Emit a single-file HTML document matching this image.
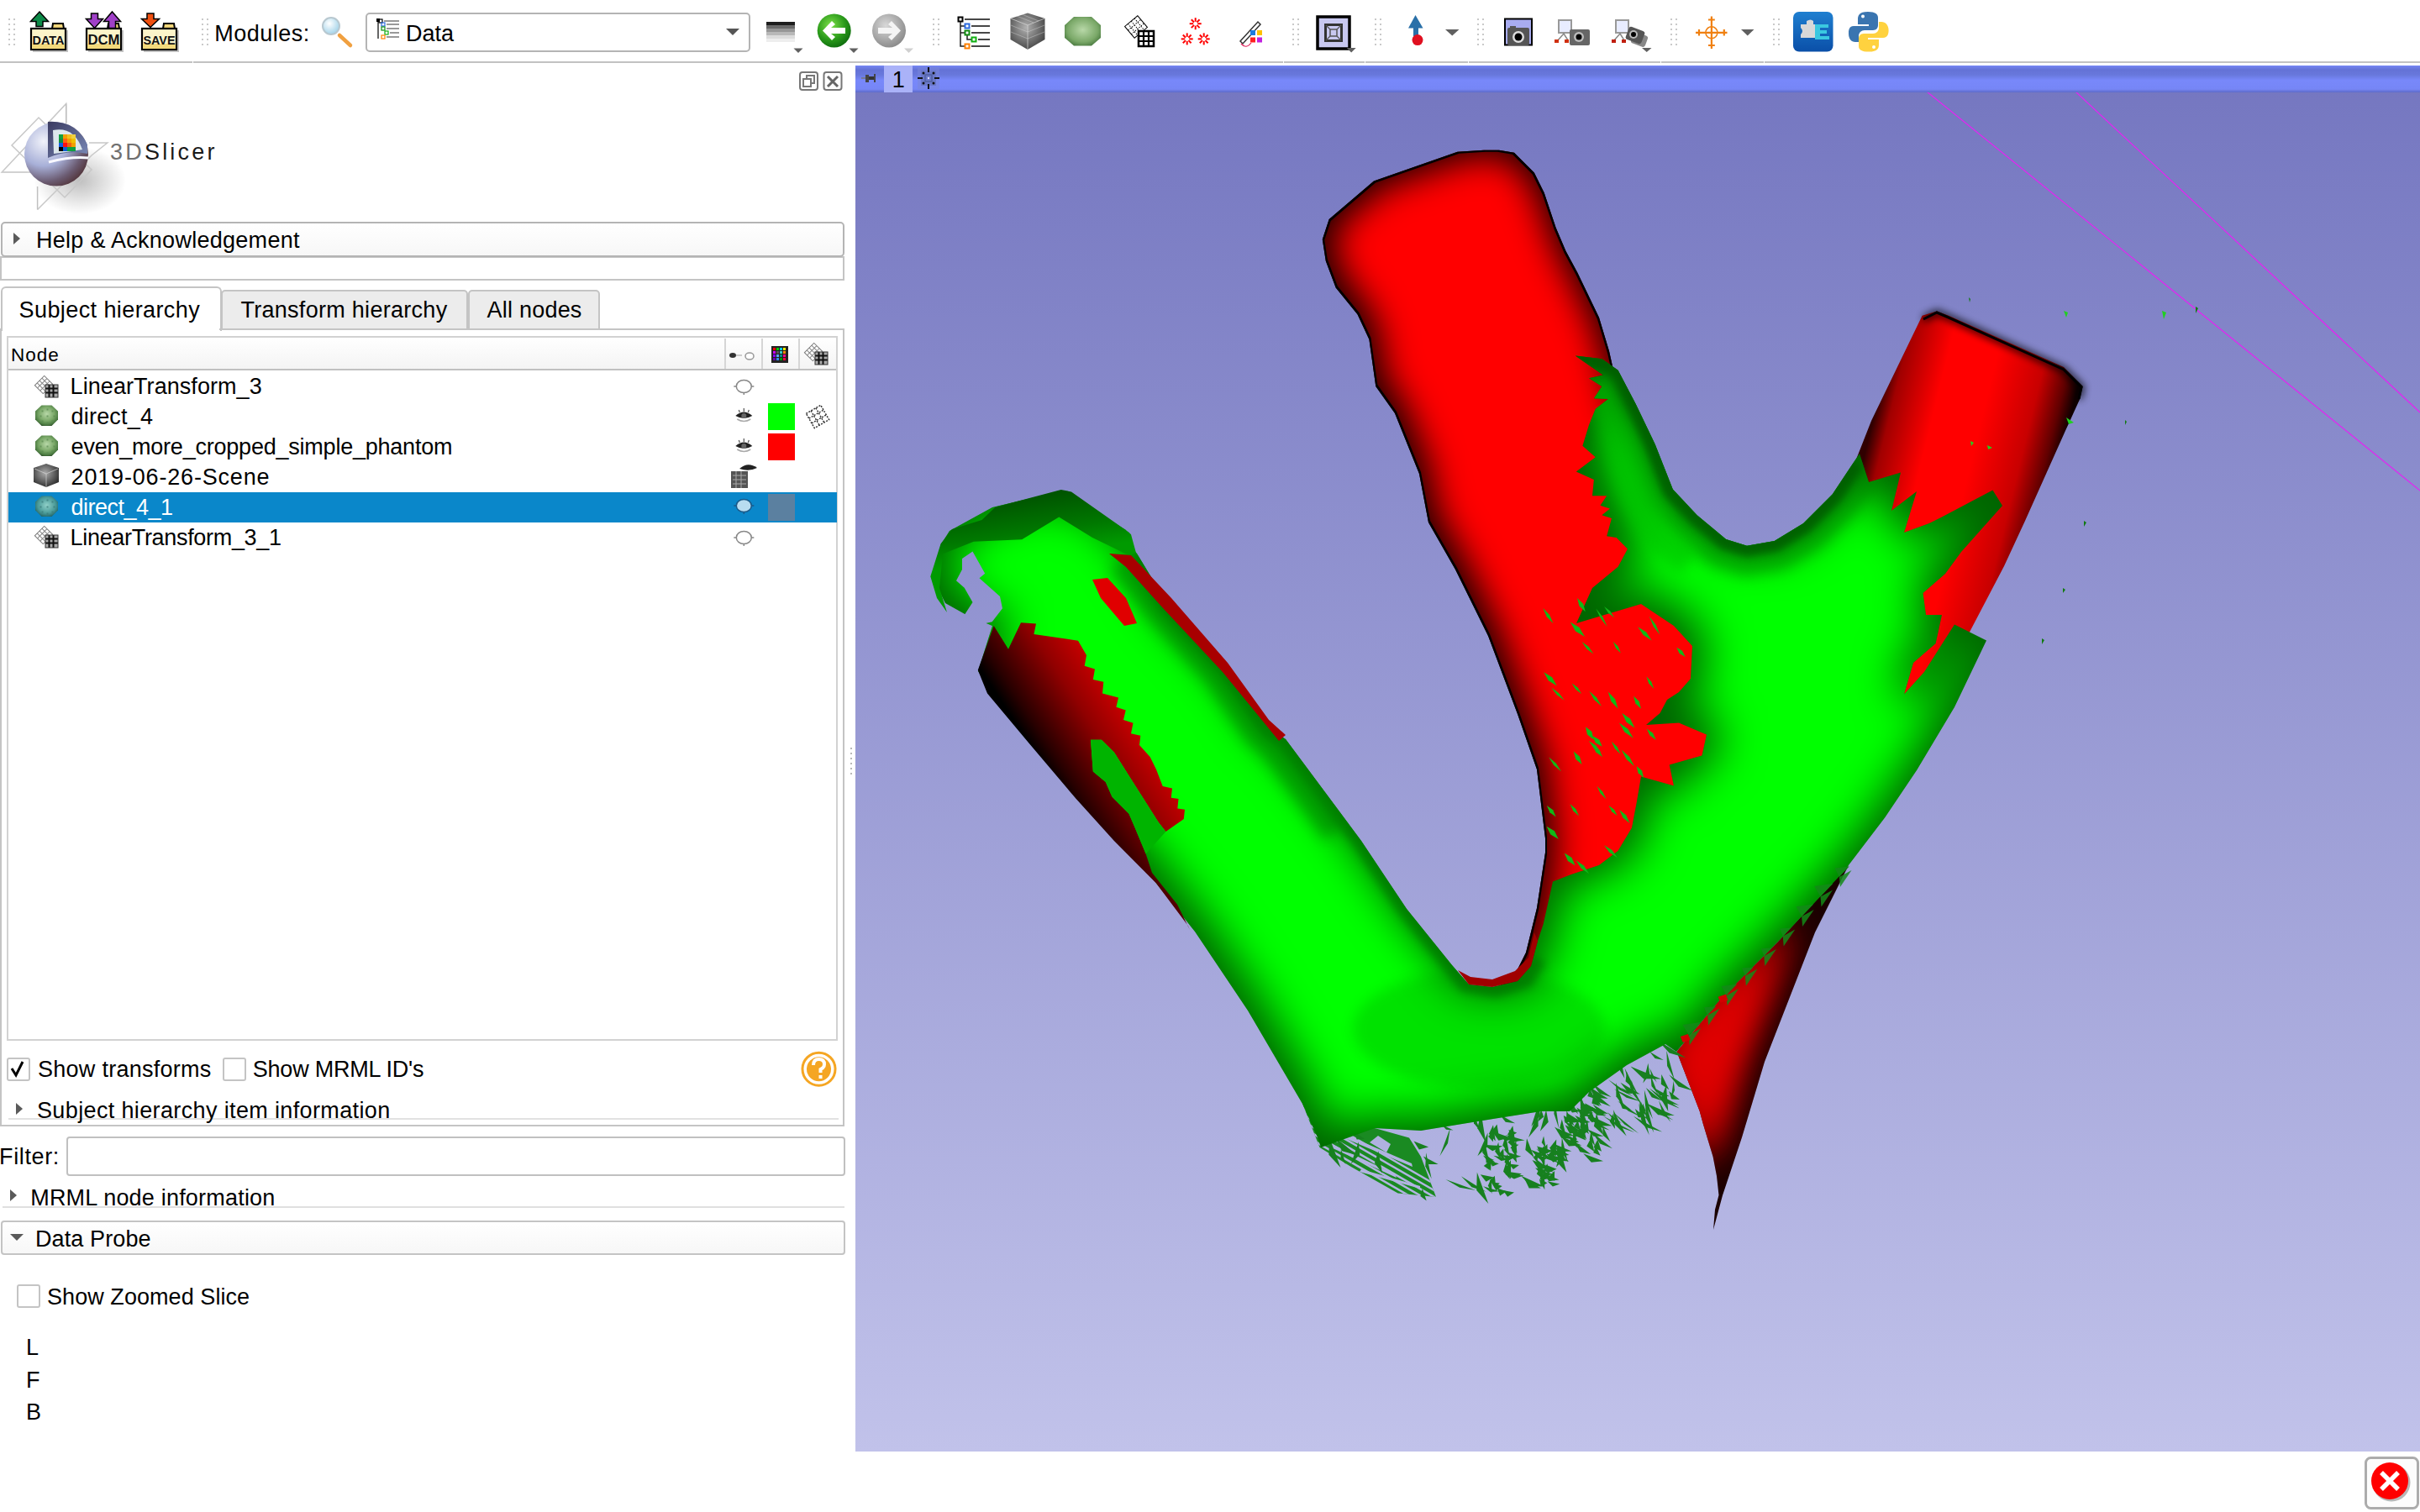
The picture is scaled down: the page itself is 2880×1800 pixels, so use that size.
<!DOCTYPE html>
<html><head><meta charset="utf-8">
<style>
*{margin:0;padding:0;box-sizing:border-box}
html,body{width:2880px;height:1800px;overflow:hidden;background:#fff;font-family:"Liberation Sans",sans-serif;color:#000}
.a{position:absolute}
.t{position:absolute;white-space:nowrap;line-height:1}
.grip{position:absolute;width:8px;border-left:2px dotted #c8c8c8;border-right:2px dotted #c8c8c8}
.tbline{position:absolute;top:73px;height:2px;background:#c2c2c2}
.arrowR{position:absolute;width:0;height:0;border-top:7px solid transparent;border-bottom:7px solid transparent;border-left:8px solid #5a5a5a}
.arrowD{position:absolute;width:0;height:0;border-left:8px solid transparent;border-right:8px solid transparent;border-top:8px solid #5a5a5a}
.ddarrow{position:absolute;width:0;height:0;border-left:8px solid transparent;border-right:8px solid transparent;border-top:8px solid #555}
.cb{position:absolute;width:28px;height:28px;border:2px solid #c4c4c4;border-radius:3px;background:#fff}
</style></head>
<body>
<!-- ============ TOOLBAR ============ -->
<div id="toolbar">
  <div class="tbline" style="left:0px;width:229px"></div>
  <div class="tbline" style="left:230px;width:1297px"></div>
  <div class="tbline" style="left:1528px;width:96px"></div>
  <div class="tbline" style="left:1625px;width:122px"></div>
  <div class="tbline" style="left:1748px;width:228px"></div>
  <div class="tbline" style="left:1977px;width:122px"></div>
  <div class="tbline" style="left:2100px;width:780px"></div>
  <div class="a" style="left:435px;top:15px;width:458px;height:47px;border:2px solid #b4b4b4;border-radius:5px;background:#fff"></div>
  <div class="ddarrow" style="left:864px;top:34px"></div>
<svg class="a" style="left:0;top:0" width="2300" height="76" viewBox="0 0 2300 76"><defs><radialGradient id="gGreenBtn" cx="0.4" cy="0.35" r="0.7"><stop offset="0" stop-color="#7ee04a"/><stop offset="0.6" stop-color="#2a9a1a"/><stop offset="1" stop-color="#0d6a0d"/></radialGradient><radialGradient id="gGrayBtn" cx="0.4" cy="0.35" r="0.7"><stop offset="0" stop-color="#d8d8d8"/><stop offset="0.6" stop-color="#a8a8a8"/><stop offset="1" stop-color="#888"/></radialGradient><linearGradient id="gExt" x1="0" y1="0" x2="0" y2="1"><stop offset="0" stop-color="#1f7fd0"/><stop offset="1" stop-color="#0a4fa8"/></linearGradient><radialGradient id="gCube" cx="0.45" cy="0.4" r="0.6"><stop offset="0" stop-color="#b0b0b0"/><stop offset="1" stop-color="#4a4a4a"/></radialGradient><radialGradient id="gModel" cx="0.5" cy="0.45" r="0.6"><stop offset="0" stop-color="#b8d8a8"/><stop offset="0.7" stop-color="#7aa868"/><stop offset="1" stop-color="#4a7a40"/></radialGradient><radialGradient id="gMag" cx="0.4" cy="0.35" r="0.7"><stop offset="0" stop-color="#ffffff"/><stop offset="1" stop-color="#9cd0e8"/></radialGradient></defs><rect x="10" y="22" width="2" height="2" fill="#c9c9c9"/><rect x="16" y="22" width="2" height="2" fill="#c9c9c9"/><rect x="10" y="28" width="2" height="2" fill="#c9c9c9"/><rect x="16" y="28" width="2" height="2" fill="#c9c9c9"/><rect x="10" y="34" width="2" height="2" fill="#c9c9c9"/><rect x="16" y="34" width="2" height="2" fill="#c9c9c9"/><rect x="10" y="40" width="2" height="2" fill="#c9c9c9"/><rect x="16" y="40" width="2" height="2" fill="#c9c9c9"/><rect x="10" y="46" width="2" height="2" fill="#c9c9c9"/><rect x="16" y="46" width="2" height="2" fill="#c9c9c9"/><rect x="10" y="52" width="2" height="2" fill="#c9c9c9"/><rect x="16" y="52" width="2" height="2" fill="#c9c9c9"/><rect x="240" y="22" width="2" height="2" fill="#c9c9c9"/><rect x="246" y="22" width="2" height="2" fill="#c9c9c9"/><rect x="240" y="28" width="2" height="2" fill="#c9c9c9"/><rect x="246" y="28" width="2" height="2" fill="#c9c9c9"/><rect x="240" y="34" width="2" height="2" fill="#c9c9c9"/><rect x="246" y="34" width="2" height="2" fill="#c9c9c9"/><rect x="240" y="40" width="2" height="2" fill="#c9c9c9"/><rect x="246" y="40" width="2" height="2" fill="#c9c9c9"/><rect x="240" y="46" width="2" height="2" fill="#c9c9c9"/><rect x="246" y="46" width="2" height="2" fill="#c9c9c9"/><rect x="240" y="52" width="2" height="2" fill="#c9c9c9"/><rect x="246" y="52" width="2" height="2" fill="#c9c9c9"/><rect x="1110" y="22" width="2" height="2" fill="#c9c9c9"/><rect x="1116" y="22" width="2" height="2" fill="#c9c9c9"/><rect x="1110" y="28" width="2" height="2" fill="#c9c9c9"/><rect x="1116" y="28" width="2" height="2" fill="#c9c9c9"/><rect x="1110" y="34" width="2" height="2" fill="#c9c9c9"/><rect x="1116" y="34" width="2" height="2" fill="#c9c9c9"/><rect x="1110" y="40" width="2" height="2" fill="#c9c9c9"/><rect x="1116" y="40" width="2" height="2" fill="#c9c9c9"/><rect x="1110" y="46" width="2" height="2" fill="#c9c9c9"/><rect x="1116" y="46" width="2" height="2" fill="#c9c9c9"/><rect x="1110" y="52" width="2" height="2" fill="#c9c9c9"/><rect x="1116" y="52" width="2" height="2" fill="#c9c9c9"/><rect x="1538" y="22" width="2" height="2" fill="#c9c9c9"/><rect x="1544" y="22" width="2" height="2" fill="#c9c9c9"/><rect x="1538" y="28" width="2" height="2" fill="#c9c9c9"/><rect x="1544" y="28" width="2" height="2" fill="#c9c9c9"/><rect x="1538" y="34" width="2" height="2" fill="#c9c9c9"/><rect x="1544" y="34" width="2" height="2" fill="#c9c9c9"/><rect x="1538" y="40" width="2" height="2" fill="#c9c9c9"/><rect x="1544" y="40" width="2" height="2" fill="#c9c9c9"/><rect x="1538" y="46" width="2" height="2" fill="#c9c9c9"/><rect x="1544" y="46" width="2" height="2" fill="#c9c9c9"/><rect x="1538" y="52" width="2" height="2" fill="#c9c9c9"/><rect x="1544" y="52" width="2" height="2" fill="#c9c9c9"/><rect x="1636" y="22" width="2" height="2" fill="#c9c9c9"/><rect x="1642" y="22" width="2" height="2" fill="#c9c9c9"/><rect x="1636" y="28" width="2" height="2" fill="#c9c9c9"/><rect x="1642" y="28" width="2" height="2" fill="#c9c9c9"/><rect x="1636" y="34" width="2" height="2" fill="#c9c9c9"/><rect x="1642" y="34" width="2" height="2" fill="#c9c9c9"/><rect x="1636" y="40" width="2" height="2" fill="#c9c9c9"/><rect x="1642" y="40" width="2" height="2" fill="#c9c9c9"/><rect x="1636" y="46" width="2" height="2" fill="#c9c9c9"/><rect x="1642" y="46" width="2" height="2" fill="#c9c9c9"/><rect x="1636" y="52" width="2" height="2" fill="#c9c9c9"/><rect x="1642" y="52" width="2" height="2" fill="#c9c9c9"/><rect x="1758" y="22" width="2" height="2" fill="#c9c9c9"/><rect x="1764" y="22" width="2" height="2" fill="#c9c9c9"/><rect x="1758" y="28" width="2" height="2" fill="#c9c9c9"/><rect x="1764" y="28" width="2" height="2" fill="#c9c9c9"/><rect x="1758" y="34" width="2" height="2" fill="#c9c9c9"/><rect x="1764" y="34" width="2" height="2" fill="#c9c9c9"/><rect x="1758" y="40" width="2" height="2" fill="#c9c9c9"/><rect x="1764" y="40" width="2" height="2" fill="#c9c9c9"/><rect x="1758" y="46" width="2" height="2" fill="#c9c9c9"/><rect x="1764" y="46" width="2" height="2" fill="#c9c9c9"/><rect x="1758" y="52" width="2" height="2" fill="#c9c9c9"/><rect x="1764" y="52" width="2" height="2" fill="#c9c9c9"/><rect x="1988" y="22" width="2" height="2" fill="#c9c9c9"/><rect x="1994" y="22" width="2" height="2" fill="#c9c9c9"/><rect x="1988" y="28" width="2" height="2" fill="#c9c9c9"/><rect x="1994" y="28" width="2" height="2" fill="#c9c9c9"/><rect x="1988" y="34" width="2" height="2" fill="#c9c9c9"/><rect x="1994" y="34" width="2" height="2" fill="#c9c9c9"/><rect x="1988" y="40" width="2" height="2" fill="#c9c9c9"/><rect x="1994" y="40" width="2" height="2" fill="#c9c9c9"/><rect x="1988" y="46" width="2" height="2" fill="#c9c9c9"/><rect x="1994" y="46" width="2" height="2" fill="#c9c9c9"/><rect x="1988" y="52" width="2" height="2" fill="#c9c9c9"/><rect x="1994" y="52" width="2" height="2" fill="#c9c9c9"/><rect x="2110" y="22" width="2" height="2" fill="#c9c9c9"/><rect x="2116" y="22" width="2" height="2" fill="#c9c9c9"/><rect x="2110" y="28" width="2" height="2" fill="#c9c9c9"/><rect x="2116" y="28" width="2" height="2" fill="#c9c9c9"/><rect x="2110" y="34" width="2" height="2" fill="#c9c9c9"/><rect x="2116" y="34" width="2" height="2" fill="#c9c9c9"/><rect x="2110" y="40" width="2" height="2" fill="#c9c9c9"/><rect x="2116" y="40" width="2" height="2" fill="#c9c9c9"/><rect x="2110" y="46" width="2" height="2" fill="#c9c9c9"/><rect x="2116" y="46" width="2" height="2" fill="#c9c9c9"/><rect x="2110" y="52" width="2" height="2" fill="#c9c9c9"/><rect x="2116" y="52" width="2" height="2" fill="#c9c9c9"/><g transform="translate(36,0)">
  <rect x="3" y="36" width="42" height="26" fill="#555" opacity="0.35"/>
  <path d="M26,34 L27,28 L39,28 L40,34 Z" fill="#f3d77a" stroke="#000" stroke-width="2"/>
  <rect x="1" y="34" width="41" height="25" fill="#fbf4c9" stroke="#000" stroke-width="2.2"/>
  <rect x="2" y="52" width="39" height="6" fill="#f2d97c"/>
  <text x="21.5" y="53" font-family="Liberation Sans" font-size="15" font-weight="bold" text-anchor="middle" fill="#111" textLength="38" lengthAdjust="spacingAndGlyphs">DATA</text>
</g><path d="M47,14 L57.5,25.5 L51.0,25.5 L51.0,31.5 L43.0,31.5 L43.0,25.5 L36.5,25.5 Z" fill="#0d8a48" stroke="#000" stroke-width="1.5"/><g transform="translate(102,0)">
  <rect x="3" y="36" width="42" height="26" fill="#555" opacity="0.35"/>
  <path d="M26,34 L27,28 L39,28 L40,34 Z" fill="#f3d77a" stroke="#000" stroke-width="2"/>
  <rect x="1" y="34" width="41" height="25" fill="#fbf4c9" stroke="#000" stroke-width="2.2"/>
  <rect x="2" y="52" width="39" height="6" fill="#f2d97c"/>
  <text x="21.5" y="53" font-family="Liberation Sans" font-size="16" font-weight="bold" text-anchor="middle" fill="#111" textLength="38" lengthAdjust="spacingAndGlyphs">DCM</text>
</g><path d="M112.5,33.5 L122.5,22.5 L116.5,22.5 L116.5,16.0 L108.5,16.0 L108.5,22.5 L102.5,22.5 Z" fill="#a040c8" stroke="#000" stroke-width="1.5"/><path d="M133.5,14 L143.5,25.5 L137.5,25.5 L137.5,33.5 L129.5,33.5 L129.5,25.5 L123.5,25.5 Z" fill="#a040c8" stroke="#000" stroke-width="1.5"/><g transform="translate(168,0)">
  <rect x="3" y="36" width="42" height="26" fill="#555" opacity="0.35"/>
  <path d="M26,34 L27,28 L39,28 L40,34 Z" fill="#f3d77a" stroke="#000" stroke-width="2"/>
  <rect x="1" y="34" width="41" height="25" fill="#fbf4c9" stroke="#000" stroke-width="2.2"/>
  <rect x="2" y="52" width="39" height="6" fill="#f2d97c"/>
  <text x="21.5" y="53" font-family="Liberation Sans" font-size="15" font-weight="bold" text-anchor="middle" fill="#111" textLength="38" lengthAdjust="spacingAndGlyphs">SAVE</text>
</g><path d="M179,32.5 L189.5,22.5 L183.0,22.5 L183.0,16.0 L175.0,16.0 L175.0,22.5 L168.5,22.5 Z" fill="#f05010" stroke="#000" stroke-width="1.5"/><line x1="404" y1="42" x2="417" y2="54" stroke="#f0a040" stroke-width="4.5" stroke-linecap="round"/><circle cx="394" cy="31" r="10" fill="url(#gMag)" stroke="#b8c8d0" stroke-width="2"/><rect x="448" y="22" width="4" height="4" fill="#000"/><line x1="450" y1="26" x2="450" y2="46" stroke="#333" stroke-width="1.5"/><rect x="451" y="23" width="4" height="4" fill="none" stroke="#000" stroke-width="1.2"/><line x1="457" y1="25" x2="475" y2="25" stroke="#555" stroke-width="1.2"/><rect x="454" y="27" width="4" height="4" fill="none" stroke="#2a6adf" stroke-width="1.2"/><line x1="460" y1="29" x2="475" y2="29" stroke="#555" stroke-width="1.2"/><rect x="454" y="32" width="4" height="4" fill="none" stroke="#109010" stroke-width="1.2"/><line x1="460" y1="34" x2="475" y2="34" stroke="#555" stroke-width="1.2"/><rect x="458" y="37" width="4" height="4" fill="none" stroke="#10b010" stroke-width="1.2"/><line x1="464" y1="39" x2="475" y2="39" stroke="#555" stroke-width="1.2"/><rect x="454" y="42" width="4" height="4" fill="none" stroke="#ff8000" stroke-width="1.2"/><line x1="460" y1="44" x2="475" y2="44" stroke="#555" stroke-width="1.2"/><rect x="912" y="26" width="34" height="4" fill="#1e1e1e"/><rect x="912" y="30" width="34" height="4" fill="#6a6a6a"/><rect x="912" y="34" width="34" height="4" fill="#969696"/><rect x="912" y="38" width="34" height="4" fill="#b8b8b8"/><rect x="912" y="42" width="34" height="4" fill="#dcdcdc"/><rect x="912" y="46" width="34" height="4" fill="#eeeeee"/><path d="M944.5,57.5 L955.5,57.5 L950.0,63.0 Z" fill="#606060"/><path d="M1010.5,57.5 L1021.5,57.5 L1016.0,63.0 Z" fill="#606060"/><path d="M1076,57.5 L1087,57.5 L1081.5,63.0 Z" fill="#d0d0d0"/><circle cx="992.7" cy="36.4" r="20" fill="url(#gGreenBtn)"/><path d="M979,36.4 L990,25 L994,29 L989,33 L1006,33 L1006,40 L989,40 L994,44 L990,48 Z" fill="#fff"/><circle cx="1058" cy="36.4" r="20" fill="url(#gGrayBtn)"/><path d="M1072,36.4 L1061,25 L1057,29 L1062,33 L1045,33 L1045,40 L1062,40 L1057,44 L1061,48 Z" fill="#f4f4f4"/><rect x="1140.5" y="20.5" width="5" height="5" fill="none" stroke="#000" stroke-width="2"/><path d="M1143,26 L1143,55 L1148,55 M1143,31 L1148,31 M1143,39 L1148,39 M1151,42 L1151,47 L1156,47" fill="none" stroke="#222" stroke-width="1.5"/><rect x="1148.5" y="28.5" width="5" height="5" fill="none" stroke="#2a6adf" stroke-width="2"/><rect x="1148.5" y="36.5" width="5" height="5" fill="none" stroke="#108a10" stroke-width="2"/><rect x="1156.5" y="44.5" width="5" height="5" fill="none" stroke="#10b010" stroke-width="2"/><rect x="1148.5" y="52.5" width="5" height="5" fill="none" stroke="#ff8000" stroke-width="2"/><line x1="1148" y1="23" x2="1178" y2="23" stroke="#333" stroke-width="1.8"/><line x1="1156" y1="31" x2="1178" y2="31" stroke="#333" stroke-width="1.8"/><line x1="1156" y1="39" x2="1178" y2="39" stroke="#333" stroke-width="1.8"/><line x1="1164" y1="47" x2="1178" y2="47" stroke="#333" stroke-width="1.8"/><line x1="1156" y1="55" x2="1178" y2="55" stroke="#333" stroke-width="1.8"/><path d="M1223,15.5 L1243.5,22 L1243.5,47 L1223,59 L1202.5,47 L1202.5,22 Z" fill="url(#gCube)"/><path d="M1203,22 L1223,30 L1243,22 M1223,30 L1223,59" stroke="#d8d8d8" stroke-width="1" fill="none" opacity="0.7"/><path d="M1210,19 L1230,27 M1216,17 L1236,25 M1203,30 L1223,38 M1203,38 L1223,46 M1243,30 L1223,38 M1243,38 L1223,46" stroke="#ddd" stroke-width="0.8" opacity="0.5"/><path d="M1278,20 L1299,20 L1310,30 L1310,45 L1299,54.5 L1278,54.5 L1267,45 L1267,30 Z" fill="url(#gModel)"/><g transform="rotate(-40 1352 32)"><rect x="1342" y="23" width="20" height="18" fill="#fff" stroke="#000" stroke-width="1"/><path d="M1347,23 L1347,41 M1352,23 L1352,41 M1357,23 L1357,41 M1342,29 L1362,29 M1342,35 L1362,35" stroke="#000" stroke-width="1" stroke-dasharray="1.5,1.5"/></g><rect x="1355" y="37" width="18" height="18" fill="#fff" stroke="#000" stroke-width="2.5"/><path d="M1361,37 L1361,55 M1367,37 L1367,55 M1355,43 L1373,43 M1355,49 L1373,49" stroke="#000" stroke-width="2.2"/><line x1="1425.2" y1="28.2" x2="1429.7" y2="28.2" stroke="#ff0000" stroke-width="2"/><line x1="1424.4" y1="29.9" x2="1427.6" y2="33.1" stroke="#ff0000" stroke-width="2"/><line x1="1422.7" y1="30.6" x2="1422.7" y2="35.2" stroke="#ff0000" stroke-width="2"/><line x1="1421.0" y1="29.9" x2="1417.8" y2="33.1" stroke="#ff0000" stroke-width="2"/><line x1="1420.2" y1="28.2" x2="1415.7" y2="28.2" stroke="#ff0000" stroke-width="2"/><line x1="1421.0" y1="26.5" x2="1417.8" y2="23.3" stroke="#ff0000" stroke-width="2"/><line x1="1422.7" y1="25.8" x2="1422.7" y2="21.2" stroke="#ff0000" stroke-width="2"/><line x1="1424.4" y1="26.5" x2="1427.6" y2="23.3" stroke="#ff0000" stroke-width="2"/><line x1="1415.2" y1="46.4" x2="1419.7" y2="46.4" stroke="#ff0000" stroke-width="2"/><line x1="1414.4" y1="48.1" x2="1417.6" y2="51.3" stroke="#ff0000" stroke-width="2"/><line x1="1412.7" y1="48.9" x2="1412.7" y2="53.4" stroke="#ff0000" stroke-width="2"/><line x1="1411.0" y1="48.1" x2="1407.8" y2="51.3" stroke="#ff0000" stroke-width="2"/><line x1="1410.2" y1="46.4" x2="1405.7" y2="46.4" stroke="#ff0000" stroke-width="2"/><line x1="1411.0" y1="44.7" x2="1407.8" y2="41.5" stroke="#ff0000" stroke-width="2"/><line x1="1412.7" y1="43.9" x2="1412.7" y2="39.4" stroke="#ff0000" stroke-width="2"/><line x1="1414.4" y1="44.7" x2="1417.6" y2="41.5" stroke="#ff0000" stroke-width="2"/><line x1="1435.2" y1="46.4" x2="1439.7" y2="46.4" stroke="#ff0000" stroke-width="2"/><line x1="1434.4" y1="48.1" x2="1437.6" y2="51.3" stroke="#ff0000" stroke-width="2"/><line x1="1432.7" y1="48.9" x2="1432.7" y2="53.4" stroke="#ff0000" stroke-width="2"/><line x1="1431.0" y1="48.1" x2="1427.8" y2="51.3" stroke="#ff0000" stroke-width="2"/><line x1="1430.2" y1="46.4" x2="1425.7" y2="46.4" stroke="#ff0000" stroke-width="2"/><line x1="1431.0" y1="44.7" x2="1427.8" y2="41.5" stroke="#ff0000" stroke-width="2"/><line x1="1432.7" y1="43.9" x2="1432.7" y2="39.4" stroke="#ff0000" stroke-width="2"/><line x1="1434.4" y1="44.7" x2="1437.6" y2="41.5" stroke="#ff0000" stroke-width="2"/><path d="M1476,49 L1497,26 L1500,29 L1479,52 Z" fill="#fff" stroke="#333" stroke-width="1.5"/><path d="M1477,52 Q1483,59 1489,51" fill="none" stroke="#e0205a" stroke-width="1.2"/><rect x="1488" y="36" width="6" height="6" fill="#1a7ae0"/><rect x="1496" y="36" width="6" height="6" fill="#ffc000"/><rect x="1488" y="44.5" width="6" height="6" fill="#ff2020"/><rect x="1496" y="44.5" width="6" height="6" fill="#c020e0"/><rect x="1568" y="20" width="38" height="38" fill="#c8c8f0" stroke="#000" stroke-width="3.5"/><rect x="1577.5" y="29.5" width="19" height="19" fill="none" stroke="#333" stroke-width="3"/><rect x="1583" y="35" width="8" height="8" fill="none" stroke="#555" stroke-width="1.5"/><path d="M1578,30 L1583,35 M1596,30 L1591,35 M1578,48 L1583,43 M1596,48 L1591,43" stroke="#555" stroke-width="1.2"/><path d="M1602.7,57 L1613.7,57 L1608.2,62.5 Z" fill="#606060"/><path d="M1684.5,18 L1693.5,33.5 L1688,33.5 L1688,43 L1682,43 L1682,33.5 L1676,33.5 Z" fill="#2a70a8"/><circle cx="1687" cy="47.6" r="6.5" fill="#e01020"/><path d="M1720,35 L1736.5,35 L1728.25,42.5 Z" fill="#606060"/><rect x="1791" y="22.5" width="32" height="31" fill="#a8acf0" stroke="#000" stroke-width="2"/><rect x="1794" y="33" width="26" height="21" rx="2" fill="#555"/><rect x="1797" y="31" width="7" height="3" fill="#555"/><circle cx="1807" cy="44" r="7" fill="#ddd"/><circle cx="1807" cy="44" r="4.5" fill="#000"/><rect x="1855" y="24" width="15" height="15" fill="#e8ecff" stroke="#999" stroke-width="2"/><path d="M1854,48 L1861,40 L1866,48" stroke="#888" stroke-width="1.5" fill="none"/><rect x="1850" y="47" width="5" height="4" fill="#d03010"/><rect x="1862" y="47" width="5" height="4" fill="#d03010"/><rect x="1868" y="35" width="24" height="19" rx="2" fill="#666"/><circle cx="1879" cy="44" r="6" fill="#bbb"/><circle cx="1879" cy="44" r="3.5" fill="#000"/><rect x="1923" y="24" width="15" height="15" fill="#e8ecff" stroke="#999" stroke-width="2"/><path d="M1921,48 L1928,40 L1933,48" stroke="#888" stroke-width="1.5" fill="none"/><rect x="1918" y="47" width="5" height="4" fill="#c02010"/><rect x="1930" y="47" width="5" height="4" fill="#c02010"/><rect x="1942" y="40" width="18" height="14" rx="3" fill="#888" transform="rotate(20 1951 47)"/><rect x="1936" y="34" width="20" height="16" rx="3" fill="#555" transform="rotate(20 1946 42)"/><circle cx="1944" cy="41" r="5" fill="#bbb"/><circle cx="1944" cy="41" r="3" fill="#000"/><path d="M1954,57 L1965.5,57 L1959.75,62 Z" fill="#606060"/><path d="M2018,38.8 L2055.5,38.8 M2036.9,19.6 L2036.9,58 M2022,35 L2022,42.6 M2051.8,35 L2051.8,42.6 M2033,23.5 L2040.8,23.5 M2033,54 L2040.8,54" stroke="#f08010" stroke-width="2.2"/><circle cx="2036.9" cy="38.8" r="7" fill="none" stroke="#f08010" stroke-width="1.5"/><path d="M2072,35 L2087.5,35 L2079.75,42.5 Z" fill="#606060"/><rect x="2134" y="14" width="47.5" height="47.5" rx="7" fill="url(#gExt)"/><path d="M2143,29 L2150,29 L2150,25 Q2155,22 2158,25 L2158,29 L2163,29 L2163,34 Q2167,37 2163,41 L2163,45 L2143,45 L2143,41 Q2147,37 2143,33 Z" fill="#d8d8d8"/><path d="M2160,29 L2176,29 L2176,33 L2166,33 L2166,36 L2174,36 L2174,40 L2166,40 L2166,43 L2177,43 L2177,47 L2160,47 Z" fill="#3ac8e0"/><path d="M2223,14 C2212,14 2211,19 2211,23 L2211,29 L2224,29 L2224,31 L2206,31 C2200,31 2200,37 2200,40 C2200,46 2203,50 2208,50 L2212,50 L2212,43 C2212,39 2215,36 2219,36 L2229,36 C2233,36 2235,33 2235,30 L2235,21 C2235,17 2232,14 2223,14 Z" fill="#3a75b0"/><path d="M2224,61.6 C2235,61.6 2236,57 2236,53 L2236,47 L2223,47 L2223,45 L2241,45 C2247,45 2247.6,39 2247.6,36 C2247.6,30 2244,26 2239,26 L2236,26 L2236,33 C2236,37 2233,40 2229,40 L2218,40 C2214,40 2212,43 2212,46 L2212,55 C2212,59 2215,61.6 2224,61.6 Z" fill="#ffd23f"/><circle cx="2217" cy="19.5" r="2" fill="#fff"/><circle cx="2230" cy="56" r="2" fill="#fff"/></svg>
</div>

<!-- ============ LEFT PANEL ============ -->
<div id="panel">
  <!-- help box -->
  <div class="a" style="left:0;top:305px;width:1005px;height:29px;border:2px solid #c4c4c4"></div>
  <div class="a" style="left:1px;top:264px;width:1004px;height:42px;border:2px solid #b4b4b4;border-radius:5px;background:linear-gradient(#fff,#f7f7f7)"></div>
  <div class="arrowR" style="left:16px;top:277px"></div>

  <!-- tabs -->
  <div class="a" style="left:1px;top:341px;width:263px;height:53px;border:2px solid #c4c4c4;border-bottom:none;border-radius:6px 6px 0 0;background:#fff"></div>
  <div class="a" style="left:263px;top:345px;width:294px;height:48px;border:2px solid #c4c4c4;border-radius:5px 5px 0 0;background:#ececec"></div>
  <div class="a" style="left:557px;top:345px;width:157px;height:48px;border:2px solid #c4c4c4;border-radius:5px 5px 0 0;background:#ececec"></div>
  <!-- tab frame -->
  <div class="a" style="left:0;top:391px;width:1005px;height:950px;border:2px solid #c4c4c4"></div>
  <div class="a" style="left:3px;top:391px;width:258px;height:3px;background:#fff"></div>
  <!-- tree -->
  <div class="a" style="left:8px;top:400px;width:989px;height:839px;border:2px solid #d2d2d2;background:#fff"></div>
  <div class="a" style="left:10px;top:402px;width:985px;height:39px;background:linear-gradient(#fff,#f4f4f4);border-bottom:2px solid #c0c0c0"></div>
  <div class="a" style="left:862px;top:403px;width:2px;height:36px;background:#d6d6d6"></div>
  <div class="a" style="left:906px;top:403px;width:2px;height:36px;background:#d6d6d6"></div>
  <div class="a" style="left:950px;top:403px;width:2px;height:36px;background:#d6d6d6"></div>
  <!-- rows -->
  <div class="a" style="left:10px;top:586px;width:986px;height:36px;background:#0a87ca"></div>
  <div class="a" style="left:914px;top:480px;width:32px;height:32px;background:#00ff00"></div>
  <div class="a" style="left:914px;top:516px;width:32px;height:32px;background:#ff0000"></div>
  <div class="a" style="left:914px;top:588px;width:32px;height:32px;background:#5b80a0"></div>
  <!-- checkboxes -->
  <div class="cb" style="left:8px;top:1259px"></div>
  <div class="cb" style="left:265px;top:1259px"></div>
  <div class="arrowR" style="left:19px;top:1313px"></div>
  <div class="a" style="left:10px;top:1330px;width:988px;height:3px;border-bottom:2px solid #e2e2e2"></div>
  <!-- filter -->
  <div class="a" style="left:79px;top:1353px;width:927px;height:47px;border:2px solid #c0c0c0;border-radius:4px;background:#fff"></div>
  <div class="arrowR" style="left:12px;top:1416px"></div>
  <div class="a" style="left:3px;top:1434px;width:1002px;height:4px;border-bottom:2px solid #e0e0e0"></div>
  <!-- data probe -->
  <div class="a" style="left:1px;top:1453px;width:1005px;height:41px;border:2px solid #c4c4c4;border-radius:4px;background:linear-gradient(#fff,#f7f7f7)"></div>
  <div class="arrowD" style="left:12px;top:1469px"></div>
  <div class="cb" style="left:20px;top:1529px"></div>
<div class="a" style="left:1012px;top:890px;width:2px;height:2px;background:#b8b8b8"></div><div class="a" style="left:1012px;top:896px;width:2px;height:2px;background:#b8b8b8"></div><div class="a" style="left:1012px;top:902px;width:2px;height:2px;background:#b8b8b8"></div><div class="a" style="left:1012px;top:908px;width:2px;height:2px;background:#b8b8b8"></div><div class="a" style="left:1012px;top:914px;width:2px;height:2px;background:#b8b8b8"></div><div class="a" style="left:1012px;top:920px;width:2px;height:2px;background:#b8b8b8"></div>
<svg class="a" style="left:0;top:60px" width="1018" height="1700" viewBox="0 60 1018 1700"><defs>
<radialGradient id="gModel2" cx="0.5" cy="0.42" r="0.62"><stop offset="0" stop-color="#b8d8a8"/><stop offset="0.55" stop-color="#7aa868"/><stop offset="0.85" stop-color="#4a7a40"/><stop offset="1" stop-color="#2a4a28"/></radialGradient>
<radialGradient id="gModelT" cx="0.5" cy="0.45" r="0.6"><stop offset="0" stop-color="#90d0c8"/><stop offset="0.65" stop-color="#4a9a98"/><stop offset="1" stop-color="#206060"/></radialGradient>
<radialGradient id="gScene" cx="0.45" cy="0.4" r="0.6"><stop offset="0" stop-color="#aaa"/><stop offset="1" stop-color="#333"/></radialGradient>
<radialGradient id="gSphere" cx="0.3" cy="0.3" r="0.85"><stop offset="0" stop-color="#f0f2fa"/><stop offset="0.45" stop-color="#a8b0d8"/><stop offset="0.75" stop-color="#6a5a70"/><stop offset="1" stop-color="#4a2828"/></radialGradient>
<radialGradient id="gShadow" cx="0.5" cy="0.5" r="0.5"><stop offset="0" stop-color="#000" stop-opacity="0.25"/><stop offset="1" stop-color="#000" stop-opacity="0"/></radialGradient>
<linearGradient id="gCut" x1="0" y1="0" x2="1" y2="1"><stop offset="0" stop-color="#3a3a60"/><stop offset="1" stop-color="#7a8ab8"/></linearGradient>
</defs><ellipse cx="95" cy="215" rx="55" ry="40" fill="url(#gShadow)"/><path d="M2.2,205 L78.7,123.4 L78.7,205 Z M14,173 L46,140 L109,202 L77,235 Z M44.6,249.5 L109,185 L127.8,170 L106,170" fill="none" stroke="#c8c8c8" stroke-width="1.5"/><path d="M2.2,205 L32,205" stroke="#d0d0d0" stroke-width="1.5"/><circle cx="67" cy="183.6" r="38" fill="url(#gSphere)"/><path d="M57,145 Q90,143 104,172 L104,183 Q80,178 57,188 Z" fill="url(#gCut)"/><path d="M63,155 Q88,150 98,178 Q80,181 64,183 Z" fill="#dce8ec"/><rect x="70" y="160" width="5" height="5" fill="#10a040"/><rect x="75" y="160" width="5" height="5" fill="#f0a000"/><rect x="80" y="160" width="5" height="5" fill="#f0c020"/><rect x="85" y="160" width="5" height="5" fill="#f0d040"/><rect x="70" y="165" width="5" height="5" fill="#109040"/><rect x="75" y="165" width="5" height="5" fill="#ff6010"/><rect x="80" y="165" width="5" height="5" fill="#f0a000"/><rect x="85" y="165" width="5" height="5" fill="#f0c000"/><rect x="70" y="170" width="5" height="5" fill="#1060e0"/><rect x="75" y="170" width="5" height="5" fill="#ff1010"/><rect x="80" y="170" width="5" height="5" fill="#f06010"/><rect x="85" y="170" width="5" height="5" fill="#f0a000"/><rect x="70" y="175" width="5" height="5" fill="#000"/><rect x="75" y="175" width="5" height="5" fill="#1060d0"/><rect x="80" y="175" width="5" height="5" fill="#10a040"/><rect x="85" y="175" width="5" height="5" fill="#10a040"/><path d="M58,193 Q85,186 105,188" stroke="#f8f8ff" stroke-width="3" fill="none"/><path d="M44.6,222 L44.6,249.5 M78.7,123.4 L78.7,146" fill="none" stroke="#c0c0c0" stroke-width="1.5"/><rect x="952" y="86" width="21" height="21" rx="3" fill="none" stroke="#777" stroke-width="2"/><rect x="956" y="94" width="9" height="9" fill="none" stroke="#777" stroke-width="2"/><path d="M960,94 L960,90 L969,90 L969,99 L965,99" fill="none" stroke="#777" stroke-width="2"/><rect x="980.5" y="86" width="21" height="21" rx="3" fill="none" stroke="#777" stroke-width="2"/><path d="M985,91 L997,103 M997,91 L985,103" stroke="#666" stroke-width="3"/><ellipse cx="872" cy="423" rx="4" ry="3" fill="#333"/><path d="M876,423 L883,423" stroke="#ccc" stroke-width="2"/><ellipse cx="892" cy="424" rx="5" ry="4" fill="#fff" stroke="#999" stroke-width="1.5"/><rect x="918" y="412" width="20" height="20" fill="#222"/><rect x="920" y="414" width="3" height="3" fill="#f00"/><rect x="924" y="414" width="3" height="3" fill="#0c0"/><rect x="928" y="414" width="3" height="3" fill="#0cf"/><rect x="932" y="414" width="3" height="3" fill="#ff0"/><rect x="920" y="418" width="3" height="3" fill="#c0f"/><rect x="924" y="418" width="3" height="3" fill="#555"/><rect x="928" y="418" width="3" height="3" fill="#3cc"/><rect x="932" y="418" width="3" height="3" fill="#f80"/><rect x="920" y="422" width="3" height="3" fill="#80f"/><rect x="924" y="422" width="3" height="3" fill="#5af"/><rect x="928" y="422" width="3" height="3" fill="#088"/><rect x="932" y="422" width="3" height="3" fill="#f08"/><rect x="920" y="426" width="3" height="3" fill="#60a"/><rect x="924" y="426" width="3" height="3" fill="#38f"/><rect x="928" y="426" width="3" height="3" fill="#090"/><rect x="932" y="426" width="3" height="3" fill="#f04"/><g transform="translate(958,407) scale(1.0)">
<g transform="rotate(-45 10 12)"><rect x="2" y="5" width="16" height="14" fill="#fff" stroke="#777" stroke-width="1"/>
<path d="M6,5 L6,19 M10,5 L10,19 M14,5 L14,19 M2,9.5 L18,9.5 M2,14 L18,14" stroke="#888" stroke-width="1"/></g>
<rect x="12" y="12" width="15" height="15" fill="#aaa"/>
<path d="M16.5,12 L16.5,27 M21.5,12 L21.5,27 M12,16.5 L27,16.5 M12,21.5 L27,21.5" stroke="#111" stroke-width="2"/>
<rect x="12" y="12" width="15" height="15" fill="none" stroke="#333" stroke-width="1"/>
</g><g transform="translate(42,446) scale(1.0)">
<g transform="rotate(-45 10 12)"><rect x="2" y="5" width="16" height="14" fill="#fff" stroke="#777" stroke-width="1"/>
<path d="M6,5 L6,19 M10,5 L10,19 M14,5 L14,19 M2,9.5 L18,9.5 M2,14 L18,14" stroke="#888" stroke-width="1"/></g>
<rect x="12" y="12" width="15" height="15" fill="#aaa"/>
<path d="M16.5,12 L16.5,27 M21.5,12 L21.5,27 M12,16.5 L27,16.5 M12,21.5 L27,21.5" stroke="#111" stroke-width="2"/>
<rect x="12" y="12" width="15" height="15" fill="none" stroke="#333" stroke-width="1"/>
</g><path d="M49.5,482.5 L61.5,482.5 L69.0,489.5 L69.0,499.5 L61.5,507.0 L49.5,507.0 L42.0,499.5 L42.0,489.5 Z" fill="url(#gModel2)"/><rect x="49.5" y="488.5" width="2" height="2" fill="#5a8a50" opacity="0.7"/><rect x="55.5" y="486.5" width="2" height="2" fill="#5a8a50" opacity="0.7"/><rect x="61.5" y="488.5" width="2" height="2" fill="#5a8a50" opacity="0.7"/><rect x="47.5" y="494.5" width="2" height="2" fill="#5a8a50" opacity="0.7"/><rect x="55.5" y="494.5" width="2" height="2" fill="#5a8a50" opacity="0.7"/><rect x="63.5" y="494.5" width="2" height="2" fill="#5a8a50" opacity="0.7"/><rect x="49.5" y="500.5" width="2" height="2" fill="#5a8a50" opacity="0.7"/><rect x="55.5" y="502.5" width="2" height="2" fill="#5a8a50" opacity="0.7"/><rect x="61.5" y="500.5" width="2" height="2" fill="#5a8a50" opacity="0.7"/><path d="M49.5,518.5 L61.5,518.5 L69.0,525.5 L69.0,535.5 L61.5,543.0 L49.5,543.0 L42.0,535.5 L42.0,525.5 Z" fill="url(#gModel2)"/><rect x="49.5" y="524.5" width="2" height="2" fill="#5a8a50" opacity="0.7"/><rect x="55.5" y="522.5" width="2" height="2" fill="#5a8a50" opacity="0.7"/><rect x="61.5" y="524.5" width="2" height="2" fill="#5a8a50" opacity="0.7"/><rect x="47.5" y="530.5" width="2" height="2" fill="#5a8a50" opacity="0.7"/><rect x="55.5" y="530.5" width="2" height="2" fill="#5a8a50" opacity="0.7"/><rect x="63.5" y="530.5" width="2" height="2" fill="#5a8a50" opacity="0.7"/><rect x="49.5" y="536.5" width="2" height="2" fill="#5a8a50" opacity="0.7"/><rect x="55.5" y="538.5" width="2" height="2" fill="#5a8a50" opacity="0.7"/><rect x="61.5" y="536.5" width="2" height="2" fill="#5a8a50" opacity="0.7"/><path d="M55,552 L70,557 L70,574 L55,580 L40,574 L40,557 Z" fill="url(#gScene)"/><path d="M41,558 L55,564 L69,558 M55,564 L55,580" stroke="#ddd" stroke-width="1" fill="none" opacity="0.6"/><path d="M49.5,590.5 L61.5,590.5 L69.0,597.5 L69.0,607.5 L61.5,615.0 L49.5,615.0 L42.0,607.5 L42.0,597.5 Z" fill="url(#gModelT)"/><rect x="49.5" y="596.5" width="2" height="2" fill="#3a7a78" opacity="0.7"/><rect x="55.5" y="594.5" width="2" height="2" fill="#3a7a78" opacity="0.7"/><rect x="61.5" y="596.5" width="2" height="2" fill="#3a7a78" opacity="0.7"/><rect x="47.5" y="602.5" width="2" height="2" fill="#3a7a78" opacity="0.7"/><rect x="55.5" y="602.5" width="2" height="2" fill="#3a7a78" opacity="0.7"/><rect x="63.5" y="602.5" width="2" height="2" fill="#3a7a78" opacity="0.7"/><rect x="49.5" y="608.5" width="2" height="2" fill="#3a7a78" opacity="0.7"/><rect x="55.5" y="610.5" width="2" height="2" fill="#3a7a78" opacity="0.7"/><rect x="61.5" y="608.5" width="2" height="2" fill="#3a7a78" opacity="0.7"/><g transform="translate(42,625) scale(1.0)">
<g transform="rotate(-45 10 12)"><rect x="2" y="5" width="16" height="14" fill="#fff" stroke="#777" stroke-width="1"/>
<path d="M6,5 L6,19 M10,5 L10,19 M14,5 L14,19 M2,9.5 L18,9.5 M2,14 L18,14" stroke="#888" stroke-width="1"/></g>
<rect x="12" y="12" width="15" height="15" fill="#aaa"/>
<path d="M16.5,12 L16.5,27 M21.5,12 L21.5,27 M12,16.5 L27,16.5 M12,21.5 L27,21.5" stroke="#111" stroke-width="2"/>
<rect x="12" y="12" width="15" height="15" fill="none" stroke="#333" stroke-width="1"/>
</g><ellipse cx="885.3" cy="460" rx="9" ry="7.5" fill="#fff" stroke="#888" stroke-width="1.5"/><path d="M873.3,460 L876.3,460 M894.3,460 L897.3,460 M885.3,468 L885.3,470" stroke="#888" stroke-width="1.5"/><path d="M875.3,495 Q885.3,486 895.3,495 Q885.3,501 875.3,495 Z" fill="#222"/><circle cx="885.3" cy="495" r="3" fill="#666"/><path d="M877.3,499 Q885.3,504 893.3,499" stroke="#aaa" stroke-width="1.5" fill="none"/><path d="M879.3,488 L880.3,491 M885.3,486 L885.3,490 M891.3,488 L890.3,491" stroke="#555" stroke-width="1.2"/><path d="M875.3,531 Q885.3,522 895.3,531 Q885.3,537 875.3,531 Z" fill="#222"/><circle cx="885.3" cy="531" r="3" fill="#666"/><path d="M877.3,535 Q885.3,540 893.3,535" stroke="#aaa" stroke-width="1.5" fill="none"/><path d="M879.3,524 L880.3,527 M885.3,522 L885.3,526 M891.3,524 L890.3,527" stroke="#555" stroke-width="1.2"/><rect x="870" y="561" width="20" height="20" fill="#555"/><path d="M872,566 L888,566 M872,571 L888,571 M872,576 L888,576 M876,561 L876,581 M882,561 L882,581" stroke="#aaa" stroke-width="1"/><path d="M880,558 Q890,549 901,557 Q891,562 880,558 Z" fill="#222"/><ellipse cx="885.3" cy="602" rx="9" ry="7.5" fill="#b8dcf0" stroke="#1a5a8a" stroke-width="1.5"/><path d="M873.3,602 L876.3,602 M894.3,602 L897.3,602 M885.3,610 L885.3,612" stroke="#1a5a8a" stroke-width="1.5"/><ellipse cx="885.3" cy="640" rx="9" ry="7.5" fill="#fff" stroke="#888" stroke-width="1.5"/><path d="M873.3,640 L876.3,640 M894.3,640 L897.3,640 M885.3,648 L885.3,650" stroke="#888" stroke-width="1.5"/><g transform="rotate(-30 973 496)"><rect x="963" y="486" width="20" height="20" fill="none" stroke="#333" stroke-width="1.5" stroke-dasharray="2,1.5"/><path d="M969.7,486 L969.7,506 M976.3,486 L976.3,506 M963,492.7 L983,492.7 M963,499.3 L983,499.3" stroke="#333" stroke-width="1.5" stroke-dasharray="2,1.5"/></g><circle cx="974.5" cy="1272.7" r="19.5" fill="#fff" stroke="#f5a623" stroke-width="3"/><circle cx="974.5" cy="1272.7" r="14.5" fill="#f5a623"/><path d="M968,1268 Q968,1261 974.5,1261 Q981,1261 981,1267 Q981,1271 976.5,1273 L976.5,1277" fill="none" stroke="#fff" stroke-width="4"/><rect x="974.5" y="1280" width="4" height="4" fill="#fff"/><path d="M14,1272 L19,1280 L27,1264" fill="none" stroke="#000" stroke-width="3"/></svg>
</div>

<!-- ============ 3D VIEW ============ -->
<div class="a" style="left:1018px;top:78px;width:1862px;height:1650px;background:linear-gradient(#7476c0 0%, #c1c2ea 100%)"></div>
<div class="a" style="left:1018px;top:78px;width:1862px;height:32px;background:linear-gradient(#7888fa 0%,#6e7ee6 6%,#6472d6 16%,#6878dc 35%,#7888fa 55%,#7686f6 88%,#6a78dc 94%,#5c6acc 100%)"></div>
<div class="a" style="left:1052px;top:78px;width:34px;height:32px;background:#aab2f8"></div>

<svg class="a" style="left:0;top:0" width="2880" height="1800" viewBox="0 0 2880 1800">
<defs>
  <clipPath id="vclip"><rect x="1018" y="110" width="1862" height="1618"/></clipPath>
  <filter id="shR" x="-20%" y="-20%" width="140%" height="140%" color-interpolation-filters="sRGB">
    <feMorphology in="SourceAlpha" operator="erode" radius="10" result="er"/>
    <feOffset in="er" dx="2" dy="-2" result="of"/>
    <feGaussianBlur in="of" stdDeviation="20" result="bl"/>
    <feFlood flood-color="#ff0000" result="fl"/>
    <feComposite in="fl" in2="bl" operator="in" result="br"/>
    <feComposite in="br" in2="SourceAlpha" operator="in" result="br2"/>
    <feFlood flood-color="#200000" result="dk"/>
    <feComposite in="dk" in2="SourceAlpha" operator="in" result="dk2"/>
    <feMorphology in="SourceAlpha" operator="erode" radius="1.5" result="in2"/>
    <feComposite in="SourceAlpha" in2="in2" operator="out" result="rim"/>
    <feFlood flood-color="#000000" result="bk"/>
    <feComposite in="bk" in2="rim" operator="in" result="rim2"/>
    <feMerge><feMergeNode in="dk2"/><feMergeNode in="br2"/><feMergeNode in="rim2"/></feMerge>
  </filter>
  <filter id="shW" x="-30%" y="-10%" width="160%" height="120%" color-interpolation-filters="sRGB">
    <feMorphology in="SourceAlpha" operator="erode" radius="8" result="er"/>
    <feOffset in="er" dx="-22" dy="0" result="of"/>
    <feGaussianBlur in="of" stdDeviation="22" result="bl"/>
    <feFlood flood-color="#e00000" result="fl"/>
    <feComposite in="fl" in2="bl" operator="in" result="br"/>
    <feComposite in="br" in2="SourceAlpha" operator="in" result="br2"/>
    <feFlood flood-color="#1a0000" result="dk"/>
    <feComposite in="dk" in2="SourceAlpha" operator="in" result="dk2"/>
    <feMerge><feMergeNode in="dk2"/><feMergeNode in="br2"/><feMergeNode in="br2"/></feMerge>
  </filter>
  <filter id="shG" x="-20%" y="-20%" width="140%" height="140%" color-interpolation-filters="sRGB">
    <feMorphology in="SourceAlpha" operator="erode" radius="12" result="er"/>
    <feOffset in="er" dx="4" dy="-4" result="of"/>
    <feGaussianBlur in="of" stdDeviation="26" result="bl"/>
    <feFlood flood-color="#00ff00" result="fl"/>
    <feComposite in="fl" in2="bl" operator="in" result="br"/>
    <feComposite in="br" in2="SourceAlpha" operator="in" result="br2"/>
    <feFlood flood-color="#006400" result="dk"/>
    <feComposite in="dk" in2="SourceAlpha" operator="in" result="dk2"/>
    <feMerge><feMergeNode in="dk2"/><feMergeNode in="br2"/></feMerge>
  </filter>
  <filter id="bl4" filterUnits="userSpaceOnUse" x="1018" y="110" width="1862" height="1618"><feGaussianBlur stdDeviation="5"/></filter>
  <linearGradient id="gBg" gradientUnits="userSpaceOnUse" x1="0" y1="77" x2="0" y2="1728"><stop offset="0" stop-color="#7476c0"/><stop offset="1" stop-color="#c1c2ea"/></linearGradient>
  <linearGradient id="gCap" gradientUnits="userSpaceOnUse" x1="1230" y1="590" x2="1240" y2="660"><stop offset="0" stop-color="#005400"/><stop offset="0.6" stop-color="#007800"/><stop offset="1" stop-color="#009a00"/></linearGradient>
  <linearGradient id="gWedge" gradientUnits="userSpaceOnUse" x1="2000" y1="1255" x2="2100" y2="1285"><stop offset="0" stop-color="#900000"/><stop offset="0.2" stop-color="#e00000"/><stop offset="0.5" stop-color="#a00000"/><stop offset="0.8" stop-color="#300000"/><stop offset="1" stop-color="#000"/></linearGradient>
  <linearGradient id="gRR" gradientUnits="userSpaceOnUse" x1="2229" y1="500" x2="2450" y2="554"><stop offset="0" stop-color="#300000"/><stop offset="0.08" stop-color="#a00000"/><stop offset="0.3" stop-color="#ff0000"/><stop offset="0.55" stop-color="#ff0000"/><stop offset="0.8" stop-color="#c80000"/><stop offset="0.93" stop-color="#600000"/><stop offset="1" stop-color="#100000"/></linearGradient>
  <clipPath id="gclip"><path d="M1109.0,686.0 L1120.0,648.0 L1130.0,632.0 L1181.0,604.0 L1265.0,584.0 L1340.0,631.0 L1346.0,651.0 L1353.0,659.0 L1390.0,720.0 L1461.0,795.0 L1510.0,867.0 L1530.0,880.0 L1620.0,1001.0 L1674.0,1082.0 L1728.0,1149.0 L1748.0,1172.0 L1776.0,1175.0 L1806.0,1168.0 L1822.0,1150.0 L1830.0,1120.0 L1836.7,1100.0 L1848.0,1049.4 L1870.0,1041.0 L1903.0,1030.0 L1925.5,1013.0 L1942.0,985.5 L1947.8,955.0 L1953.0,924.4 L1992.0,935.5 L1986.7,910.5 L2025.5,899.4 L2031.0,874.4 L1998.0,860.5 L1959.0,863.0 L1975.5,849.0 L1984.0,833.0 L1998.0,824.0 L2012.0,808.0 L2014.0,769.0 L1992.0,745.0 L1953.0,719.0 L1876.0,742.0 L1895.0,700.0 L1925.6,674.7 L1937.0,653.6 L1923.7,640.0 L1912.2,638.2 L1918.0,617.0 L1906.4,613.3 L1916.0,605.6 L1904.5,601.8 L1912.2,590.3 L1895.0,590.3 L1896.9,571.0 L1875.8,561.5 L1898.8,544.3 L1883.4,530.8 L1891.0,506.0 L1898.8,486.7 L1914.0,475.0 L1896.9,474.2 L1906.4,460.0 L1891.0,450.3 L1908.0,446.4 L1874.8,423.4 L1906.4,427.3 L1925.6,440.7 L1946.7,481.0 L1969.7,528.9 L1990.8,582.6 L2019.6,613.3 L2054.1,642.0 L2079.0,649.7 L2111.7,644.0 L2146.2,622.9 L2180.7,588.4 L2207.6,548.0 L2213.0,540.0 L2224.0,574.0 L2262.0,562.6 L2251.0,608.0 L2281.0,585.0 L2266.0,634.0 L2296.0,623.0 L2311.0,615.4 L2371.5,583.4 L2383.0,602.0 L2334.0,657.0 L2315.0,683.0 L2288.5,706.0 L2292.0,732.0 L2311.0,732.0 L2303.6,766.0 L2277.0,789.0 L2266.0,826.6 L2290.0,800.0 L2326.0,743.6 L2364.0,762.5 L2326.0,841.7 L2281.0,917.0 L2243.0,973.6 L2194.0,1037.7 L2115.0,1122.0 L2047.0,1190.0 L1995.0,1252.0 L1982.0,1243.0 L1936.0,1268.0 L1891.0,1300.0 L1868.0,1323.0 L1834.0,1323.0 L1777.0,1332.0 L1691.0,1346.0 L1636.0,1343.0 L1572.0,1366.0 L1568.0,1354.0 L1550.0,1314.0 L1485.0,1203.0 L1422.0,1109.0 L1350.0,1019.0 L1260.0,920.0 L1198.0,850.0 L1164.0,799.0 L1181.0,745.0 L1150.0,732.0 L1125.0,718.0 Z"/></clipPath>
  <filter id="bl8" filterUnits="userSpaceOnUse" x="1018" y="110" width="1862" height="1618"><feGaussianBlur stdDeviation="8"/></filter>

  <linearGradient id="gOuter" gradientUnits="userSpaceOnUse" x1="1225" y1="886" x2="1351" y2="804">
    <stop offset="0" stop-color="#000"/><stop offset="0.12" stop-color="#280000"/><stop offset="0.5" stop-color="#900000"/><stop offset="0.85" stop-color="#d40000"/><stop offset="1" stop-color="#e00000"/>
  </linearGradient>
</defs>
<g clip-path="url(#vclip)">
  <line x1="2293" y1="109" x2="2880" y2="584" stroke="#e028f0" stroke-width="1.3"/>
  <line x1="2470" y1="109" x2="2880" y2="491" stroke="#e028f0" stroke-width="1.3"/>
  <path filter="url(#shR)" fill="#f00" d="M1573.8,285.0 L1581.7,261.0 L1635.0,215.6 L1734.5,180.8 L1766.0,178.8 L1784.0,178.8 L1802.0,181.8 L1825.8,205.6 L1837.7,229.4 L1851.6,271.0 L1863.5,299.0 L1877.4,324.7 L1903.0,378.0 L1915.0,418.0 L1921.0,445.0 L1950.0,540.0 L1980.0,610.0 L2040.0,660.0 L2090.0,760.0 L2090.0,900.0 L2070.0,1050.0 L1900.0,1200.0 L1776.0,1180.0 L1803.0,1160.0 L1816.0,1134.0 L1829.0,1081.0 L1839.0,1015.0 L1839.0,998.0 L1829.0,916.0 L1806.0,850.0 L1771.0,757.0 L1732.0,678.0 L1700.0,622.0 L1689.0,564.0 L1660.0,492.0 L1637.3,460.0 L1629.4,404.0 L1615.5,374.3 L1589.7,342.5 L1577.8,310.8 Z"/>
  <path fill="url(#gRR)" d="M2120.0,660.0 L2146.0,628.0 L2180.0,592.0 L2207.0,552.0 L2227.0,501.0 L2287.6,375.7 L2305.0,370.4 L2319.0,375.7 L2456.0,437.0 L2478.7,459.8 L2475.0,475.6 L2459.0,510.6 L2410.0,620.0 L2385.0,674.0 L2340.0,760.0 L2300.0,840.0 L2265.0,917.0 L2230.0,973.0 L2180.0,1035.0 L2100.0,950.0 L2100.0,700.0 Z"/>
  <path d="M2289,380 L2305,372 L2319,378 L2456,440 L2477,461 L2474,475" fill="none" stroke="#000" stroke-width="7" opacity="0.85" filter="url(#bl4)"/>
  <path d="M2289,380 L2305,372 L2319,378 L2456,440 L2477,461 L2474,475" fill="none" stroke="#000" stroke-width="3"/>
  <path fill="#f00" filter="url(#shW)" d="M2200.0,1030.0 L2160.0,1110.0 L2100.0,1264.0 L2073.0,1354.0 L2050.0,1423.0 L2039.0,1464.0 L2041.0,1440.0 L2045.5,1422.7 L2043.0,1400.0 L2038.6,1377.0 L2027.0,1338.6 L2022.7,1322.7 L1995.5,1252.0 L2047.0,1190.0 L2115.0,1122.0 Z"/>
  <clipPath id="rlclip"><path d="M1550.0,1313.6 L1570.5,1366.0 L1607.0,1388.6 L1663.6,1420.5 L1709.0,1425.0 L1691.0,1377.0 L1677.0,1354.5 L1636.0,1343.0 Z"/></clipPath>
  <path fill="#1a8a22" d="M1550.0,1313.6 L1570.5,1366.0 L1607.0,1388.6 L1663.6,1420.5 L1709.0,1425.0 L1691.0,1377.0 L1677.0,1354.5 L1636.0,1343.0 Z"/>
  <g clip-path="url(#rlclip)" stroke="url(#gBg)" stroke-width="2.5"><line x1="1500" y1="1290" x2="1760" y2="1440"/><line x1="1502" y1="1299" x2="1762" y2="1449"/><line x1="1504" y1="1308" x2="1764" y2="1458"/><line x1="1506" y1="1317" x2="1766" y2="1467"/><line x1="1508" y1="1326" x2="1768" y2="1476"/><line x1="1510" y1="1335" x2="1770" y2="1485"/><line x1="1512" y1="1344" x2="1772" y2="1494"/><line x1="1514" y1="1353" x2="1774" y2="1503"/><line x1="1516" y1="1362" x2="1776" y2="1512"/><line x1="1518" y1="1371" x2="1778" y2="1521"/><line x1="1520" y1="1380" x2="1780" y2="1530"/><line x1="1522" y1="1389" x2="1782" y2="1539"/><line x1="1524" y1="1398" x2="1784" y2="1548"/><line x1="1526" y1="1407" x2="1786" y2="1557"/></g>
  <g fill="url(#gBg)"><path d="M1585,1362 L1660,1398 L1662,1402 L1584,1366 Z"/><path d="M1600,1350 L1680,1385 L1681,1389 L1598,1354 Z"/><path d="M1620,1392 L1690,1412 L1690,1415 L1618,1395 Z"/><path d="M1640,1352 L1655,1362 L1650,1372 L1630,1360 Z"/></g>
  <g fill="#17801f"><path d="M1941.8,1286.0 L1939.9,1294.6 L1945.0,1301.7 Z"/><path d="M1607.9,1385.6 L1618.2,1374.4 L1616.8,1359.3 Z"/><path d="M1697.1,1372.3 L1696.3,1388.6 L1703.7,1403.2 Z"/><path d="M1692.8,1415.1 L1690.4,1423.9 L1697.7,1429.6 Z"/><path d="M1857.0,1368.7 L1853.6,1384.2 L1864.4,1395.7 Z"/><path d="M1817.0,1355.3 L1815.3,1369.1 L1825.8,1378.1 Z"/><path d="M1762.5,1324.1 L1758.4,1343.3 L1768.3,1360.3 Z"/><path d="M1929.7,1264.1 L1927.9,1274.6 L1933.4,1283.7 Z"/><path d="M1852.0,1389.6 L1862.1,1379.3 L1857.9,1365.6 Z"/><path d="M1611.6,1347.6 L1614.6,1356.6 L1624.0,1355.8 Z"/><path d="M1830.0,1335.5 L1837.2,1329.6 L1834.0,1320.8 Z"/><path d="M1884.2,1373.2 L1893.8,1383.7 L1908.0,1382.2 Z"/><path d="M1982.9,1291.7 L1976.6,1307.9 L1985.3,1322.9 Z"/><path d="M1640.3,1370.3 L1635.9,1384.8 L1645.1,1396.8 Z"/><path d="M1823.5,1376.6 L1834.4,1389.8 L1850.0,1396.6 Z"/><path d="M1757.8,1395.6 L1757.2,1416.9 L1771.3,1432.9 Z"/><path d="M1713.5,1376.2 L1723.0,1360.9 L1725.8,1343.0 Z"/><path d="M1893.4,1320.9 L1889.8,1331.3 L1899.2,1336.9 Z"/><path d="M1764.9,1375.4 L1770.0,1381.7 L1778.1,1381.1 Z"/><path d="M1822.3,1341.0 L1832.8,1328.4 L1831.7,1312.1 Z"/><path d="M1715.4,1338.6 L1721.1,1344.8 L1729.5,1345.5 Z"/><path d="M1959.4,1313.5 L1973.3,1327.2 L1992.8,1327.9 Z"/><path d="M1890.8,1293.2 L1898.3,1306.7 L1913.6,1308.0 Z"/><path d="M1813.7,1401.9 L1819.7,1414.6 L1833.8,1414.5 Z"/><path d="M1881.8,1353.4 L1890.7,1345.5 L1889.1,1333.6 Z"/><path d="M1893.3,1328.6 L1903.1,1340.6 L1918.5,1340.3 Z"/><path d="M1832.9,1346.7 L1842.7,1335.8 L1840.0,1321.4 Z"/><path d="M1920.3,1325.0 L1915.6,1335.0 L1922.1,1343.9 Z"/><path d="M1955.3,1289.6 L1963.3,1279.0 L1961.4,1265.8 Z"/><path d="M1588.6,1353.8 L1597.1,1370.3 L1615.0,1375.2 Z"/><path d="M1767.9,1374.2 L1768.7,1384.6 L1779.1,1383.6 Z"/><path d="M1754.1,1325.8 L1754.0,1337.2 L1761.3,1346.0 Z"/><path d="M1767.1,1359.7 L1764.1,1372.0 L1772.0,1381.9 Z"/><path d="M1738.9,1400.2 L1751.4,1413.2 L1768.5,1418.8 Z"/><path d="M1784.8,1326.7 L1791.7,1335.8 L1803.1,1337.3 Z"/><path d="M1839.3,1386.4 L1843.3,1395.9 L1852.6,1391.8 Z"/><path d="M1582.1,1354.0 L1581.4,1374.7 L1595.5,1389.9 Z"/><path d="M1693.8,1376.6 L1700.1,1386.1 L1711.6,1385.9 Z"/><path d="M1758.4,1376.3 L1770.2,1365.0 L1770.5,1348.6 Z"/><path d="M1950.2,1326.4 L1958.6,1322.5 L1955.3,1313.8 Z"/><path d="M1988.5,1308.5 L1993.0,1298.0 L1991.7,1286.7 Z"/><path d="M1682.5,1358.5 L1688.8,1368.4 L1700.1,1365.5 Z"/><path d="M1819.1,1353.9 L1830.6,1340.6 L1830.4,1322.9 Z"/><path d="M1874.4,1327.9 L1881.0,1337.5 L1892.6,1335.9 Z"/><path d="M1828.1,1367.4 L1841.0,1379.7 L1857.7,1385.5 Z"/><path d="M1809.9,1399.6 L1821.4,1412.0 L1838.2,1412.5 Z"/><path d="M1976.5,1304.3 L1985.9,1312.9 L1998.3,1315.8 Z"/><path d="M1860.8,1328.1 L1862.8,1337.1 L1871.4,1333.9 Z"/><path d="M1595.9,1367.9 L1595.5,1378.0 L1601.6,1386.1 Z"/><path d="M1850.2,1308.0 L1849.4,1326.1 L1855.2,1343.3 Z"/><path d="M1837.1,1352.6 L1834.7,1360.2 L1839.6,1366.5 Z"/><path d="M1869.8,1363.2 L1876.7,1356.6 L1873.0,1347.8 Z"/><path d="M1858.8,1353.7 L1858.0,1369.8 L1865.9,1383.8 Z"/><path d="M1940.5,1269.6 L1955.8,1284.2 L1977.0,1284.5 Z"/><path d="M1720.4,1404.1 L1737.1,1413.7 L1756.2,1416.9 Z"/><path d="M1781.8,1414.6 L1785.1,1423.4 L1793.0,1418.3 Z"/><path d="M1792.1,1351.2 L1788.2,1363.4 L1796.0,1373.5 Z"/><path d="M1795.4,1394.9 L1802.1,1402.9 L1810.9,1397.3 Z"/><path d="M1774.7,1407.6 L1779.1,1415.0 L1784.7,1408.4 Z"/><path d="M1791.0,1397.7 L1801.9,1403.6 L1813.6,1399.3 Z"/><path d="M1777.2,1408.6 L1780.1,1417.6 L1787.7,1411.9 Z"/><path d="M1777.0,1339.3 L1771.9,1349.8 L1779.8,1358.4 Z"/><path d="M1771.8,1381.4 L1776.1,1388.5 L1783.8,1385.3 Z"/><path d="M1798.0,1380.9 L1790.3,1392.4 L1798.1,1403.7 Z"/><path d="M1761.8,1398.3 L1768.5,1406.8 L1777.8,1401.5 Z"/><path d="M1795.6,1385.4 L1801.0,1391.9 L1807.9,1387.1 Z"/><path d="M1788.7,1416.9 L1794.1,1424.7 L1802.0,1419.5 Z"/><path d="M1783.5,1352.0 L1791.8,1358.2 L1802.0,1356.0 Z"/><path d="M1783.2,1359.8 L1779.1,1370.8 L1786.3,1380.2 Z"/><path d="M1774.8,1379.5 L1769.0,1386.4 L1774.1,1393.9 Z"/><path d="M1787.9,1374.9 L1794.9,1382.0 L1803.6,1377.0 Z"/><path d="M1794.1,1373.5 L1790.5,1383.4 L1797.6,1391.2 Z"/><path d="M1792.1,1371.0 L1799.5,1379.3 L1810.3,1376.7 Z"/><path d="M1795.4,1344.9 L1798.0,1353.1 L1805.2,1348.4 Z"/><path d="M1775.3,1346.6 L1783.5,1357.8 L1797.0,1354.3 Z"/><path d="M1777.6,1347.1 L1771.1,1352.8 L1776.8,1359.2 Z"/><path d="M1792.4,1383.4 L1789.0,1394.8 L1797.0,1403.7 Z"/><path d="M1772.5,1382.4 L1765.8,1387.9 L1772.8,1393.0 Z"/><path d="M1777.4,1375.7 L1786.6,1382.1 L1797.7,1379.9 Z"/><path d="M1789.2,1367.6 L1783.2,1374.5 L1790.0,1380.7 Z"/><path d="M1804.3,1358.7 L1797.5,1366.5 L1805.4,1373.1 Z"/><path d="M1765.0,1362.7 L1776.2,1370.3 L1788.4,1364.3 Z"/><path d="M1775.0,1401.8 L1770.9,1411.5 L1775.4,1420.9 Z"/><path d="M1797.1,1361.2 L1801.4,1367.3 L1807.4,1362.8 Z"/><path d="M1781.5,1338.6 L1775.4,1346.7 L1783.8,1352.5 Z"/><path d="M1802.4,1357.7 L1799.0,1369.1 L1805.4,1379.0 Z"/><path d="M1800.2,1343.8 L1794.5,1353.7 L1801.6,1362.5 Z"/><path d="M1800.3,1340.2 L1794.1,1350.4 L1803.1,1358.3 Z"/><path d="M1798.8,1354.7 L1803.3,1359.8 L1809.3,1356.6 Z"/><path d="M1793.6,1362.8 L1790.1,1369.1 L1795.1,1374.3 Z"/><path d="M1765.1,1412.2 L1773.6,1419.1 L1784.6,1418.2 Z"/><path d="M1803.8,1372.5 L1800.2,1378.7 L1805.1,1383.9 Z"/><path d="M1792.1,1351.0 L1802.0,1358.9 L1814.6,1357.5 Z"/><path d="M1778.8,1399.7 L1772.6,1406.0 L1780.0,1410.9 Z"/><path d="M1801.8,1351.9 L1794.4,1359.7 L1802.3,1367.0 Z"/><path d="M1827.0,1390.6 L1833.8,1397.3 L1842.4,1393.2 Z"/><path d="M1840.3,1373.4 L1848.2,1383.4 L1860.1,1378.7 Z"/><path d="M1831.9,1403.8 L1833.8,1412.4 L1841.5,1408.2 Z"/><path d="M1833.9,1387.1 L1828.8,1397.6 L1837.8,1405.0 Z"/><path d="M1823.5,1381.0 L1831.4,1392.7 L1845.2,1389.8 Z"/><path d="M1850.1,1394.1 L1844.0,1399.9 L1849.9,1406.0 Z"/><path d="M1836.4,1396.2 L1843.4,1406.3 L1855.5,1404.5 Z"/><path d="M1831.1,1395.3 L1837.4,1404.3 L1848.1,1402.1 Z"/><path d="M1829.6,1366.8 L1833.5,1373.9 L1839.8,1368.8 Z"/><path d="M1837.8,1364.1 L1832.4,1370.8 L1839.9,1374.9 Z"/><path d="M1832.7,1393.2 L1839.1,1400.3 L1848.3,1397.8 Z"/><path d="M1849.6,1366.3 L1842.4,1375.0 L1849.4,1383.9 Z"/><path d="M1829.0,1375.6 L1834.7,1381.9 L1842.5,1378.4 Z"/><path d="M1833.9,1369.5 L1827.2,1376.5 L1835.4,1381.6 Z"/><path d="M1837.9,1399.1 L1833.2,1407.8 L1838.3,1416.2 Z"/><path d="M1844.2,1366.0 L1848.8,1376.0 L1859.4,1372.8 Z"/><path d="M1830.3,1371.8 L1825.2,1377.4 L1829.6,1383.5 Z"/><path d="M1836.0,1394.2 L1832.6,1403.2 L1839.1,1410.2 Z"/><path d="M1841.4,1385.3 L1837.4,1392.8 L1844.1,1398.0 Z"/><path d="M1852.2,1356.5 L1844.3,1366.5 L1851.7,1376.8 Z"/><path d="M1838.6,1371.6 L1834.1,1380.9 L1838.2,1390.3 Z"/><path d="M1841.4,1362.0 L1836.0,1367.9 L1841.8,1373.4 Z"/><path d="M1821.8,1368.7 L1829.2,1377.3 L1840.4,1375.4 Z"/><path d="M1828.8,1364.4 L1836.6,1374.5 L1848.4,1370.0 Z"/><path d="M1841.5,1406.3 L1847.9,1412.5 L1856.3,1409.4 Z"/><path d="M1851.1,1365.6 L1855.6,1376.6 L1867.4,1375.0 Z"/><path d="M1873.5,1353.6 L1871.8,1361.7 L1878.0,1367.0 Z"/><path d="M1895.8,1297.2 L1896.0,1309.5 L1905.9,1316.7 Z"/><path d="M1860.8,1333.3 L1869.6,1344.4 L1883.3,1348.0 Z"/><path d="M1893.5,1354.6 L1888.3,1364.4 L1897.3,1371.0 Z"/><path d="M1876.9,1291.5 L1876.0,1306.0 L1885.5,1316.9 Z"/><path d="M1888.4,1344.1 L1896.5,1352.8 L1908.4,1352.7 Z"/><path d="M1864.4,1322.2 L1864.1,1333.7 L1873.7,1340.2 Z"/><path d="M1901.3,1356.5 L1896.5,1366.0 L1906.0,1370.8 Z"/><path d="M1865.7,1325.4 L1870.1,1336.7 L1882.2,1335.4 Z"/><path d="M1864.8,1315.9 L1871.0,1324.5 L1881.6,1323.0 Z"/><path d="M1851.1,1371.4 L1855.9,1381.7 L1867.2,1382.4 Z"/><path d="M1890.2,1328.8 L1894.3,1336.3 L1902.4,1333.6 Z"/><path d="M1877.8,1333.7 L1873.0,1341.4 L1880.9,1345.9 Z"/><path d="M1867.8,1352.7 L1869.8,1362.2 L1879.1,1359.6 Z"/><path d="M1892.2,1296.2 L1889.3,1304.9 L1898.0,1307.9 Z"/><path d="M1899.9,1325.4 L1896.9,1340.7 L1908.4,1351.3 Z"/><path d="M1880.5,1312.3 L1889.7,1323.2 L1903.8,1322.2 Z"/><path d="M1888.8,1316.4 L1898.4,1325.6 L1911.7,1326.5 Z"/><path d="M1867.8,1331.6 L1867.3,1341.1 L1874.4,1347.3 Z"/><path d="M1880.3,1318.5 L1886.2,1326.8 L1896.3,1324.9 Z"/><path d="M1879.6,1341.6 L1876.7,1352.9 L1887.2,1357.6 Z"/><path d="M1874.1,1359.6 L1880.3,1371.2 L1893.1,1374.0 Z"/><path d="M1881.6,1316.7 L1880.1,1330.0 L1889.6,1339.5 Z"/><path d="M1894.5,1317.7 L1900.2,1327.5 L1911.6,1328.6 Z"/><path d="M1886.1,1313.3 L1890.2,1323.0 L1900.7,1321.3 Z"/><path d="M1896.4,1303.5 L1894.4,1313.5 L1904.0,1317.1 Z"/><path d="M1876.3,1318.6 L1882.0,1329.0 L1893.9,1328.8 Z"/><path d="M1880.7,1306.4 L1881.0,1318.8 L1891.5,1325.5 Z"/><path d="M1893.4,1345.9 L1891.8,1356.3 L1898.3,1364.5 Z"/><path d="M1888.0,1327.3 L1892.9,1334.8 L1902.0,1335.4 Z"/><path d="M1883.1,1337.1 L1879.8,1348.4 L1888.1,1356.8 Z"/><path d="M1858.8,1332.5 L1856.2,1342.7 L1863.3,1350.4 Z"/><path d="M1853.5,1343.3 L1861.9,1352.2 L1874.1,1352.3 Z"/><path d="M1883.0,1329.2 L1880.2,1342.2 L1891.0,1349.9 Z"/><path d="M1850.1,1341.4 L1858.2,1354.7 L1873.7,1356.3 Z"/><path d="M1848.3,1361.2 L1857.0,1371.3 L1870.3,1370.6 Z"/><path d="M1895.4,1314.4 L1902.4,1324.2 L1914.3,1326.3 Z"/><path d="M1862.6,1339.2 L1868.2,1349.7 L1879.8,1347.2 Z"/><path d="M1898.9,1363.7 L1896.3,1372.3 L1904.6,1375.8 Z"/><path d="M1857.4,1352.6 L1867.1,1364.4 L1882.3,1363.4 Z"/><path d="M1868.9,1342.6 L1873.4,1353.4 L1884.8,1351.2 Z"/><path d="M1881.3,1294.7 L1876.1,1303.2 L1885.5,1306.3 Z"/><path d="M1868.1,1306.8 L1869.3,1318.5 L1878.2,1326.3 Z"/><path d="M1856.1,1295.5 L1855.1,1310.0 L1864.3,1321.1 Z"/><path d="M1953.1,1311.6 L1953.0,1332.5 L1962.6,1351.1 Z"/><path d="M1963.4,1271.7 L1965.4,1281.1 L1971.7,1288.5 Z"/><path d="M1929.2,1294.9 L1935.2,1301.3 L1944.0,1302.3 Z"/><path d="M1974.0,1310.1 L1978.4,1324.4 L1988.3,1335.7 Z"/><path d="M1936.8,1283.9 L1942.9,1302.0 L1955.0,1316.8 Z"/><path d="M1943.9,1328.7 L1959.0,1341.9 L1978.2,1347.6 Z"/><path d="M1894.0,1298.3 L1902.1,1311.8 L1916.9,1317.2 Z"/><path d="M1951.5,1310.4 L1951.3,1321.9 L1960.5,1328.8 Z"/><path d="M1962.7,1295.5 L1978.6,1311.2 L1999.1,1319.8 Z"/><path d="M1928.5,1288.8 L1937.4,1300.4 L1951.9,1302.4 Z"/><path d="M1964.5,1280.2 L1965.5,1292.9 L1973.4,1303.0 Z"/><path d="M1923.2,1289.1 L1923.4,1305.3 L1933.1,1318.3 Z"/><path d="M1936.0,1275.9 L1934.5,1287.3 L1943.0,1295.0 Z"/><path d="M1921.0,1296.5 L1935.7,1306.7 L1953.0,1311.5 Z"/><path d="M1919.6,1324.0 L1933.2,1338.6 L1950.1,1349.3 Z"/><path d="M1965.2,1317.1 L1975.2,1325.6 L1988.0,1328.9 Z"/><path d="M1912.7,1324.1 L1919.7,1332.6 L1929.9,1336.9 Z"/><path d="M1968.1,1295.1 L1975.5,1304.2 L1987.1,1305.2 Z"/><path d="M1986.2,1299.1 L1989.3,1308.4 L1999.1,1309.1 Z"/><path d="M1950.3,1313.2 L1952.1,1327.8 L1958.8,1340.8 Z"/><path d="M1958.1,1309.8 L1958.6,1330.2 L1968.2,1348.2 Z"/><path d="M1958.8,1295.1 L1965.7,1306.3 L1978.2,1310.4 Z"/><path d="M1914.1,1285.3 L1927.5,1297.6 L1943.9,1305.5 Z"/><path d="M1895.0,1348.3 L1904.1,1361.4 L1918.9,1367.2 Z"/><path d="M1907.7,1328.6 L1925.3,1340.9 L1945.5,1348.3 Z"/><path d="M1956.8,1297.3 L1958.0,1315.7 L1966.9,1331.9 Z"/><path d="M1933.4,1271.2 L1938.2,1289.3 L1949.9,1304.1 Z"/><path d="M1962.9,1315.4 L1975.6,1327.0 L1991.4,1333.6 Z"/><path d="M1895.0,1289.8 L1903.5,1301.8 L1917.6,1306.0 Z"/><path d="M1907.1,1340.0 L1907.7,1351.6 L1916.5,1359.2 Z"/><path d="M1986.3,1279.6 L1997.5,1293.4 L2014.5,1298.5 Z"/><path d="M1926.6,1309.4 L1930.8,1319.7 L1941.7,1321.7 Z"/><path d="M1919.9,1321.0 L1922.5,1339.4 L1935.7,1352.5 Z"/><path d="M1895.1,1333.0 L1903.7,1341.7 L1915.5,1345.4 Z"/><path d="M1945.8,1320.0 L1949.5,1330.1 L1960.2,1331.5 Z"/><path d="M1973.0,1238.4 L1986.6,1253.5 L2006.2,1259.2 Z"/><path d="M1924.9,1310.5 L1937.6,1322.6 L1953.4,1329.9 Z"/><path d="M1977.3,1279.1 L1976.8,1290.7 L1986.4,1297.2 Z"/><path d="M1983.3,1250.8 L1984.1,1268.9 L1992.7,1284.9 Z"/><path d="M1963.2,1251.9 L1969.6,1260.1 L1979.7,1261.9 Z"/></g>
  <path filter="url(#shG)" fill="#0f0" d="M1109.0,686.0 L1120.0,648.0 L1130.0,632.0 L1181.0,604.0 L1265.0,584.0 L1340.0,631.0 L1346.0,651.0 L1353.0,659.0 L1390.0,720.0 L1461.0,795.0 L1510.0,867.0 L1530.0,880.0 L1620.0,1001.0 L1674.0,1082.0 L1728.0,1149.0 L1748.0,1172.0 L1776.0,1175.0 L1806.0,1168.0 L1822.0,1150.0 L1830.0,1120.0 L1836.7,1100.0 L1848.0,1049.4 L1870.0,1041.0 L1903.0,1030.0 L1925.5,1013.0 L1942.0,985.5 L1947.8,955.0 L1953.0,924.4 L1992.0,935.5 L1986.7,910.5 L2025.5,899.4 L2031.0,874.4 L1998.0,860.5 L1959.0,863.0 L1975.5,849.0 L1984.0,833.0 L1998.0,824.0 L2012.0,808.0 L2014.0,769.0 L1992.0,745.0 L1953.0,719.0 L1876.0,742.0 L1895.0,700.0 L1925.6,674.7 L1937.0,653.6 L1923.7,640.0 L1912.2,638.2 L1918.0,617.0 L1906.4,613.3 L1916.0,605.6 L1904.5,601.8 L1912.2,590.3 L1895.0,590.3 L1896.9,571.0 L1875.8,561.5 L1898.8,544.3 L1883.4,530.8 L1891.0,506.0 L1898.8,486.7 L1914.0,475.0 L1896.9,474.2 L1906.4,460.0 L1891.0,450.3 L1908.0,446.4 L1874.8,423.4 L1906.4,427.3 L1925.6,440.7 L1946.7,481.0 L1969.7,528.9 L1990.8,582.6 L2019.6,613.3 L2054.1,642.0 L2079.0,649.7 L2111.7,644.0 L2146.2,622.9 L2180.7,588.4 L2207.6,548.0 L2213.0,540.0 L2224.0,574.0 L2262.0,562.6 L2251.0,608.0 L2281.0,585.0 L2266.0,634.0 L2296.0,623.0 L2311.0,615.4 L2371.5,583.4 L2383.0,602.0 L2334.0,657.0 L2315.0,683.0 L2288.5,706.0 L2292.0,732.0 L2311.0,732.0 L2303.6,766.0 L2277.0,789.0 L2266.0,826.6 L2290.0,800.0 L2326.0,743.6 L2364.0,762.5 L2326.0,841.7 L2281.0,917.0 L2243.0,973.6 L2194.0,1037.7 L2115.0,1122.0 L2047.0,1190.0 L1995.0,1252.0 L1982.0,1243.0 L1936.0,1268.0 L1891.0,1300.0 L1868.0,1323.0 L1834.0,1323.0 L1777.0,1332.0 L1691.0,1346.0 L1636.0,1343.0 L1572.0,1366.0 L1568.0,1354.0 L1550.0,1314.0 L1485.0,1203.0 L1422.0,1109.0 L1350.0,1019.0 L1260.0,920.0 L1198.0,850.0 L1164.0,799.0 L1181.0,745.0 L1150.0,732.0 L1125.0,718.0 Z"/>
  <g clip-path="url(#gclip)">
    <path d="M1874.8,423.4 L1906.4,427.3 L1925.6,440.7 L1946.7,481.0 L1969.7,528.9 L1990.8,582.6 L2019.6,613.3 L2054.1,642.0 L2079.0,649.7 L2111.7,644.0 L2146.2,622.9 L2180.7,588.4 L2207.6,548.0" fill="none" stroke="#008a00" stroke-width="70" opacity="0.55" filter="url(#bl8)"/>
    <path d="M1874.8,423.4 L1906.4,427.3 L1925.6,440.7 L1946.7,481.0 L1969.7,528.9 L1990.8,582.6 L2019.6,613.3 L2054.1,642.0 L2079.0,649.7 L2111.7,644.0 L2146.2,622.9 L2180.7,588.4 L2207.6,548.0" fill="none" stroke="#005a00" stroke-width="26" opacity="0.85" filter="url(#bl4)"/>
    <path d="M1353.0,659.0 L1390.0,720.0 L1461.0,795.0 L1510.0,867.0 L1530.0,880.0 L1620.0,1001.0 L1674.0,1082.0 L1728.0,1149.0 L1745.0,1170.0 L1780.0,1176.0 L1815.0,1165.0 L1830.0,1140.0" fill="none" stroke="#007000" stroke-width="22" opacity="0.6" filter="url(#bl4)"/>
    <path d="M1898,455 L1922,515 L1945,585 L1975,640 L2010,670" fill="none" stroke="#00c000" stroke-width="34" opacity="0.6" filter="url(#bl8)"/>
    <path d="M1335,668 L1378,724 L1447,800 L1496,872 L1516,890 L1590,990" fill="none" stroke="#008000" stroke-width="34" opacity="0.55" filter="url(#bl8)"/>
    <ellipse cx="1760" cy="1225" rx="150" ry="70" fill="#006000" opacity="0.18" filter="url(#bl8)"/>
  </g>
  <path fill="url(#gCap)" d="M1107.3,686.3 L1119.6,647.2 L1133.0,630.0 L1168.5,619.0 L1184.4,603.7 L1262.7,583.0 L1275.0,585.4 L1343.5,633.7 L1346.0,636.2 L1352.0,658.2 L1342.2,660.6 L1300.0,640.0 L1260.3,615.4 L1216.2,642.3 L1158.7,644.7 L1122.0,659.4 L1118.0,700.0 L1127.0,729.0 L1115.0,712.0 Z"/>
  <path fill="url(#gBg)" d="M1157.5,656.4 L1172.2,682.7 L1165.5,688.2 L1190.0,710.0 L1193.0,724.3 L1180.7,740.2 L1160.0,745.0 L1146.5,734.0 L1157.5,717.0 L1147.7,699.8 L1138.0,691.2 L1145.0,678.0 L1145.0,665.0 Z"/>
  <path fill="#a00000" d="M1735.0,1155.0 L1750.0,1163.0 L1776.0,1166.0 L1803.0,1156.0 L1819.0,1140.0 L1826.0,1110.0 L1830.0,1120.0 L1822.0,1150.0 L1806.0,1168.0 L1776.0,1175.0 L1748.0,1172.0 Z"/>
  <g fill="#138a18" opacity="0.85"><path d="M2188.9,1044.1 L2200.9,1031.4 L2183.6,1033.5 Z"/><path d="M2188.9,1044.1 L2189.9,1056.1 L2203.5,1035.9 Z"/><path d="M2166.5,1067.6 L2181.5,1051.8 L2159.2,1055.1 Z"/><path d="M2166.5,1067.6 L2167.5,1079.6 L2181.1,1059.4 Z"/><path d="M2144.1,1091.1 L2158.1,1076.4 L2137.5,1079.3 Z"/><path d="M2144.1,1091.1 L2145.1,1103.1 L2158.7,1083.0 Z"/><path d="M2121.7,1114.6 L2131.3,1104.5 L2118.0,1105.6 Z"/><path d="M2121.7,1114.6 L2122.7,1126.6 L2136.3,1106.5 Z"/><path d="M2099.3,1138.1 L2108.7,1128.2 L2095.7,1129.2 Z"/><path d="M2099.3,1138.1 L2100.3,1150.1 L2113.9,1130.0 Z"/><path d="M2076.9,1161.7 L2086.6,1151.4 L2073.1,1152.6 Z"/><path d="M2076.9,1161.7 L2077.9,1173.7 L2091.5,1153.5 Z"/><path d="M2054.5,1185.2 L2067.4,1171.6 L2048.6,1174.0 Z"/><path d="M2054.5,1185.2 L2055.5,1197.2 L2069.1,1177.1 Z"/><path d="M2032.1,1208.7 L2042.3,1198.0 L2028.0,1199.3 Z"/><path d="M2032.1,1208.7 L2033.1,1220.7 L2046.7,1200.6 Z"/><path d="M2009.7,1232.2 L2024.5,1216.7 L2002.5,1219.9 Z"/><path d="M2009.7,1232.2 L2010.7,1244.2 L2024.3,1224.1 Z"/></g>
  <g fill="#d40000"><path d="M2044.6,1186.8 L2053.6,1183.8 L2056.6,1190.8 L2047.6,1193.8 Z"/><path d="M1999.8,1233.9 L2008.8,1230.9 L2011.8,1237.9 L2002.8,1240.9 Z"/></g>
  <path fill="url(#gOuter)" d="M1182.7,745.0 L1163.8,797.8 L1175.0,825.5 L1225.4,885.8 L1280.7,951.0 L1325.9,1001.0 L1376.0,1051.6 L1413.8,1101.9 L1416.0,1106.9 L1401.0,1076.7 L1371.0,1039.0 L1363.6,1016.4 L1351.0,986.3 L1343.5,968.7 L1323.4,948.6 L1315.8,931.0 L1300.8,918.4 L1298.0,880.8 L1310.8,880.8 L1326.0,895.8 L1343.5,923.5 L1361.0,951.0 L1378.6,978.7 L1387.4,990.0 L1408.8,975.0 L1410.0,963.7 L1401.3,962.4 L1402.5,951.0 L1393.7,949.8 L1395.0,938.5 L1383.7,936.0 L1376.0,916.0 L1368.6,900.9 L1356.0,887.0 L1357.3,875.7 L1346.0,873.2 L1348.5,860.7 L1337.0,857.0 L1339.7,845.6 L1328.4,841.8 L1331.0,830.5 L1312.0,825.5 L1313.3,811.7 L1300.8,809.0 L1303.0,796.6 L1290.7,792.8 L1293.0,780.0 L1283.0,762.7 L1230.4,755.0 L1233.0,742.6 L1215.0,741.3 L1200.0,772.7 Z"/>
  <path fill="#00b400" d="M1298.0,880.8 L1310.8,880.8 L1326.0,895.8 L1343.5,923.5 L1361.0,951.0 L1378.6,978.7 L1387.4,990.0 L1363.6,1016.4 L1351.0,986.3 L1343.5,968.7 L1323.4,948.6 L1315.8,931.0 L1300.8,918.4 Z"/>
  <path fill="#a80000" d="M1320.0,659.0 L1346.0,661.0 L1394.0,712.0 L1461.0,789.0 L1510.0,857.0 L1530.0,875.0 L1522.0,882.0 L1455.0,800.0 L1385.0,725.0 L1340.0,675.0 Z"/>
  <path fill="#e00000" d="M1300.0,690.0 L1318.0,688.0 L1340.0,712.0 L1353.0,742.0 L1338.0,745.0 L1310.0,712.0 Z"/>
  <g fill="#10b818"><path d="M1926.9,860.4 L1933.4,871.4 L1943.8,878.7 L1937.3,867.7 Z"/><path d="M1843.0,901.3 L1849.2,911.0 L1858.1,918.4 L1851.9,908.7 Z"/><path d="M1959.7,867.4 L1963.5,875.6 L1970.9,880.9 L1967.1,872.7 Z"/><path d="M1846.1,818.6 L1852.9,827.2 L1861.8,833.7 L1855.1,825.0 Z"/><path d="M1914.5,959.0 L1918.2,966.2 L1924.6,971.0 L1921.0,963.8 Z"/><path d="M1836.3,723.9 L1840.7,734.2 L1848.5,742.2 L1844.1,731.9 Z"/><path d="M1870.7,813.4 L1875.2,820.7 L1882.1,826.0 L1877.6,818.6 Z"/><path d="M1886.9,865.2 L1889.0,874.5 L1896.5,880.4 L1894.4,871.1 Z"/><path d="M1882.6,764.0 L1888.3,772.4 L1896.4,778.4 L1890.7,770.1 Z"/><path d="M1962.6,733.5 L1967.6,745.5 L1975.4,755.8 L1970.5,743.8 Z"/><path d="M1895.1,886.8 L1899.3,895.6 L1907.2,901.2 L1903.0,892.4 Z"/><path d="M1917.8,882.7 L1921.8,891.3 L1928.6,897.8 L1924.6,889.3 Z"/><path d="M1947.6,912.0 L1949.6,920.2 L1956.1,925.7 L1954.1,917.5 Z"/><path d="M1899.4,724.5 L1904.8,736.0 L1912.7,745.9 L1907.4,734.4 Z"/><path d="M1837.2,800.2 L1842.8,810.3 L1852.8,816.4 L1847.1,806.2 Z"/><path d="M1929.6,892.6 L1935.5,903.8 L1945.0,912.2 L1939.2,901.0 Z"/><path d="M1900.5,935.8 L1904.6,944.4 L1911.4,951.2 L1907.3,942.6 Z"/><path d="M1949.1,746.2 L1955.7,756.1 L1965.7,762.5 L1959.1,752.6 Z"/><path d="M1909.1,1006.2 L1915.5,1015.1 L1924.8,1020.9 L1918.5,1011.9 Z"/><path d="M1995.2,770.7 L1998.7,777.9 L2005.6,782.1 L2002.1,774.8 Z"/><path d="M1930.4,849.1 L1935.6,859.8 L1945.4,866.5 L1940.2,855.8 Z"/><path d="M1840.8,958.9 L1844.4,967.3 L1851.7,972.6 L1848.2,964.2 Z"/><path d="M1944.0,828.5 L1946.4,837.4 L1953.0,843.8 L1950.7,834.9 Z"/><path d="M1875.4,1023.9 L1881.7,1033.7 L1891.2,1040.2 L1885.0,1030.5 Z"/><path d="M1868.4,956.9 L1872.2,965.3 L1879.1,971.4 L1875.3,963.0 Z"/><path d="M1840.5,983.7 L1845.3,993.6 L1854.8,999.1 L1850.0,989.3 Z"/><path d="M1891.3,822.7 L1897.2,832.9 L1906.0,840.7 L1900.1,830.5 Z"/><path d="M1959.3,805.2 L1962.2,813.4 L1968.2,819.9 L1965.2,811.6 Z"/><path d="M1868.7,740.4 L1875.0,751.5 L1886.0,758.0 L1879.6,747.0 Z"/><path d="M1927.2,964.1 L1931.4,973.4 L1939.5,979.9 L1935.2,970.5 Z"/><path d="M1913.8,823.5 L1917.3,835.0 L1925.6,843.7 L1922.1,832.2 Z"/><path d="M1877.0,712.1 L1879.5,721.5 L1886.7,728.2 L1884.2,718.7 Z"/><path d="M1890.8,882.1 L1896.7,890.7 L1905.5,896.3 L1899.6,887.7 Z"/><path d="M1895.3,876.0 L1898.8,884.3 L1906.7,888.8 L1903.2,880.4 Z"/><path d="M1919.8,763.7 L1922.9,771.6 L1928.9,777.6 L1925.7,769.7 Z"/><path d="M1872.7,894.5 L1875.2,903.8 L1882.5,910.0 L1880.0,900.7 Z"/><path d="M1861.7,1015.4 L1865.9,1024.9 L1874.7,1030.5 L1870.5,1021.0 Z"/><path d="M1909.1,722.0 L1914.0,729.7 L1921.1,735.2 L1916.3,727.6 Z"/></g>
  <path fill="#20d020" d="M2573,370 L2578,372 L2575,380 Z M2459,497 L2468,503 L2462,505 Z M2456,370 L2461,372 L2459,378 Z M2365,530 L2371,533 L2366,535 Z M2345,525 L2349,527 L2346,531 Z"/>
  <path fill="#107a10" d="M2613,365 L2616,367 L2613,373 Z M2529,500 L2531,502 L2529,506 Z M2343,354 L2345,356 L2344,360 Z M2480,620 L2483,622 L2480,627 Z M2455,700 L2458,702 L2455,706 Z M2430,760 L2433,762 L2430,767 Z"/>
</g>
</svg>
<svg class="a" style="left:1018px;top:77px" width="120" height="34" viewBox="1018 77 120 34"><path d="M1025,93 L1030,93" stroke="#777" stroke-width="1.5"/><rect x="1030" y="89" width="4" height="9" fill="#444"/><rect x="1034" y="91" width="6" height="4" fill="#333"/><rect x="1040" y="88" width="2" height="10" fill="#444"/><rect x="1092" y="80" width="26" height="26" fill="#7a86d8" opacity="0.5"/><rect x="1096" y="84" width="18" height="18" fill="#6a78c8"/><path d="M1105,80 L1105,86 M1105,100 L1105,106 M1092,93 L1098,93 M1112,93 L1118,93" stroke="#111" stroke-width="2"/><circle cx="1099" cy="87" r="1.5" fill="#111"/><circle cx="1111" cy="87" r="1.5" fill="#111"/><circle cx="1099" cy="99" r="1.5" fill="#111"/><circle cx="1111" cy="99" r="1.5" fill="#111"/><rect x="1101" y="89" width="8" height="8" fill="none" stroke="#5060a0" stroke-width="1.5"/><circle cx="1105" cy="93" r="1.2" fill="#ddf"/></svg>

<!-- status bar close button -->
<svg class="a" style="left:2814px;top:1734px" width="66" height="66" viewBox="2814 1734 66 66"><rect x="2815.5" y="1735.5" width="62" height="60" rx="6" fill="#fcfcfc" stroke="#acacac" stroke-width="3"/><circle cx="2846" cy="1765" r="22.5" fill="#888" opacity="0.6"/><circle cx="2844" cy="1763" r="22" fill="#ff0000"/><path d="M2834,1753 L2854,1773 M2854,1753 L2834,1773" stroke="#fff" stroke-width="5.5"/></svg>
<div class="t" id="t0" style="left:255.20px;top:26.94px;font-size:27px;letter-spacing:0.514px;color:#000">Modules:</div>
<div class="t" id="t1" style="left:483.00px;top:26.54px;font-size:27px;letter-spacing:0.000px;color:#000">Data</div>
<div class="t" id="t2" style="left:43.00px;top:272.74px;font-size:27px;letter-spacing:0.276px;color:#000">Help &amp; Acknowledgement</div>
<div class="t" id="t3" style="left:22.60px;top:356.14px;font-size:27px;letter-spacing:0.406px;color:#000">Subject hierarchy</div>
<div class="t" id="t4" style="left:286.40px;top:356.14px;font-size:27px;letter-spacing:0.289px;color:#000">Transform hierarchy</div>
<div class="t" id="t5" style="left:579.60px;top:356.14px;font-size:27px;letter-spacing:0.212px;color:#000">All nodes</div>
<div class="t" id="t6" style="left:13.00px;top:411.95px;font-size:22.5px;letter-spacing:1.000px;color:#000">Node</div>
<div class="t" id="t7" style="left:83.60px;top:447.14px;font-size:27px;letter-spacing:0.062px;color:#000">LinearTransform_3</div>
<div class="t" id="t8" style="left:84.60px;top:483.14px;font-size:27px;letter-spacing:0.186px;color:#000">direct_4</div>
<div class="t" id="t9" style="left:84.60px;top:519.14px;font-size:27px;letter-spacing:-0.223px;color:#000">even_more_cropped_simple_phantom</div>
<div class="t" id="t10" style="left:84.60px;top:555.14px;font-size:27px;letter-spacing:0.820px;color:#000">2019-06-26-Scene</div>
<div class="t" id="t11" style="left:84.60px;top:591.14px;font-size:27px;letter-spacing:-0.522px;color:#fff">direct_4_1</div>
<div class="t" id="t12" style="left:83.60px;top:627.14px;font-size:27px;letter-spacing:-0.317px;color:#000">LinearTransform_3_1</div>
<div class="t" id="t13" style="left:45.00px;top:1260.14px;font-size:27px;letter-spacing:0.271px;color:#000">Show transforms</div>
<div class="t" id="t14" style="left:300.80px;top:1260.14px;font-size:27px;letter-spacing:-0.231px;color:#000">Show MRML ID's</div>
<div class="t" id="t15" style="left:44.00px;top:1308.74px;font-size:27px;letter-spacing:0.364px;color:#000">Subject hierarchy item information</div>
<div class="t" id="t16" style="left:-1.00px;top:1363.94px;font-size:27px;letter-spacing:0.633px;color:#000">Filter:</div>
<div class="t" id="t17" style="left:36.20px;top:1413.14px;font-size:27px;letter-spacing:0.200px;color:#000">MRML node information</div>
<div class="t" id="t18" style="left:42.00px;top:1461.74px;font-size:27px;letter-spacing:0.111px;color:#000">Data Probe</div>
<div class="t" id="t19" style="left:56.00px;top:1530.94px;font-size:27px;letter-spacing:0.062px;color:#000">Show Zoomed Slice</div>
<div class="t" id="t20" style="left:31.00px;top:1591.34px;font-size:27px;letter-spacing:0.000px;color:#000">L</div>
<div class="t" id="t21" style="left:31.00px;top:1629.94px;font-size:27px;letter-spacing:0.000px;color:#000">F</div>
<div class="t" id="t22" style="left:31.00px;top:1667.94px;font-size:27px;letter-spacing:0.000px;color:#000">B</div>
<div class="t" id="t23" style="left:1061.80px;top:81.94px;font-size:27px;letter-spacing:0.000px;color:#000">1</div>
<div class="t" id="logo" style="left:131px;top:168px;font-size:27px;letter-spacing:3.2px;color:#1a1a1a"><span style="color:#707070">3D</span>Slicer</div>
</body></html>
